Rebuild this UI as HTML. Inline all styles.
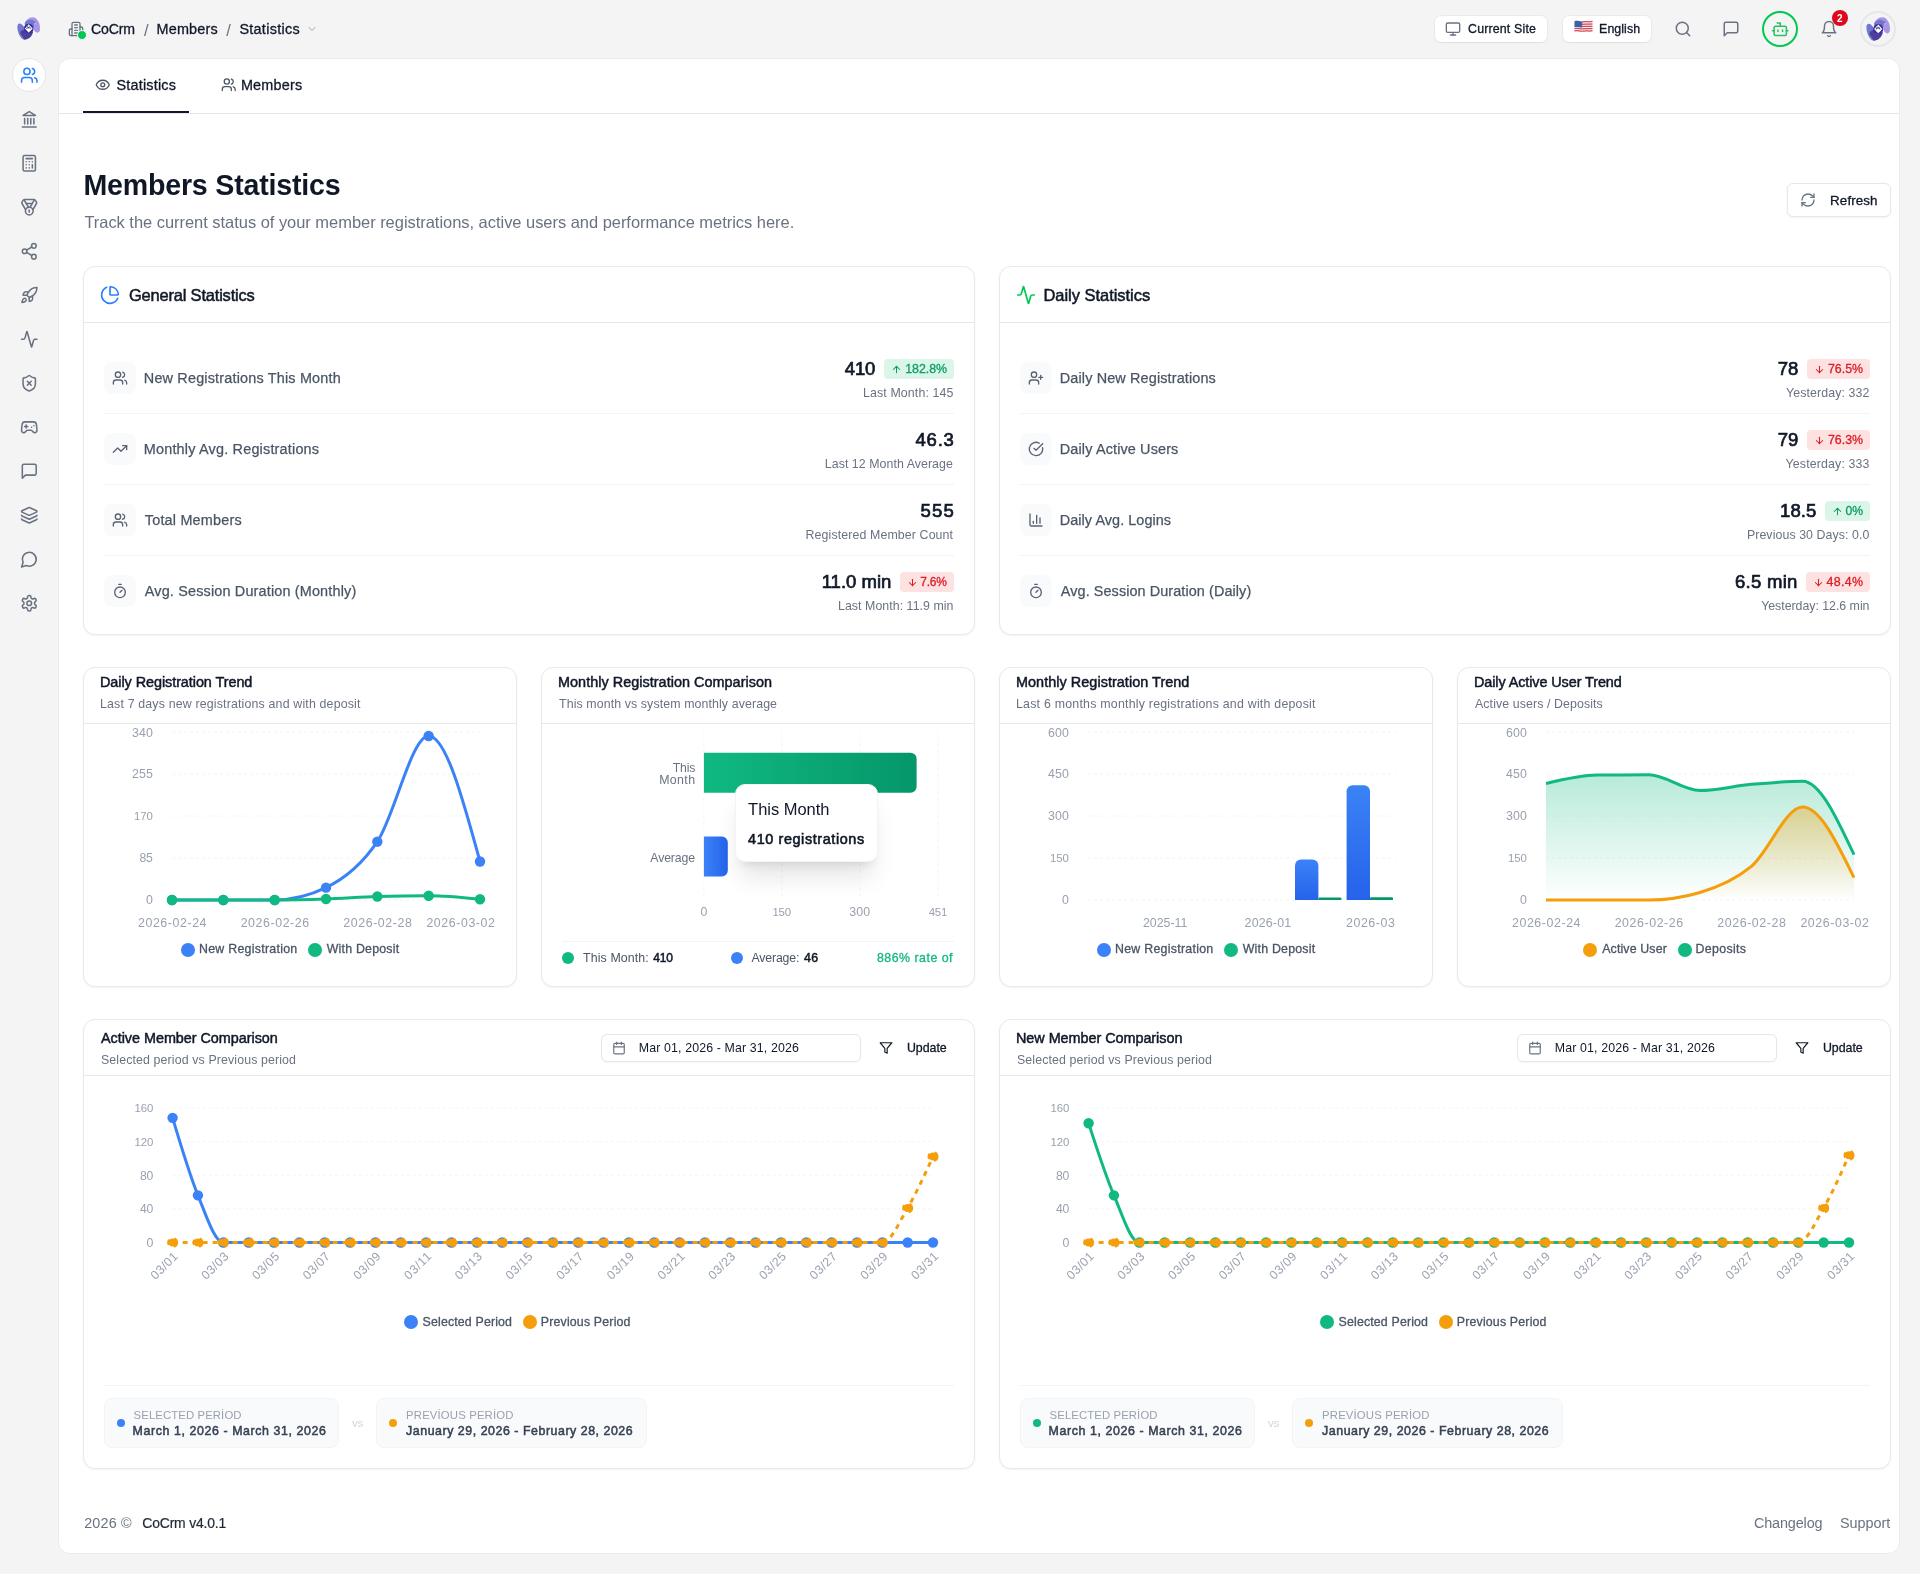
<!DOCTYPE html>
<html lang="en"><head><meta charset="utf-8"><title>Members Statistics</title>
<style>
html,body{margin:0;padding:0;background:#f4f4f5;}
#root{position:relative;width:1920px;height:1574px;overflow:hidden;font-family:"Liberation Sans", sans-serif;will-change:transform;}
#root div,#root svg,#root span.t{position:absolute;box-sizing:border-box;}
#root span.t{white-space:pre;line-height:1;}
.card{background:#fff;border:1px solid #e7e9ed;border-radius:12px;box-shadow:0 1px 2px rgba(0,0,0,0.05);}
</style></head><body><div id="root">
<svg style="left:17.10px;top:17.30px" width="23" height="23" viewBox="0 0 90 90">
<path d="M1.5 36 C2 30 5 26 9 25 C14 24.500 19 28 23 33 L30 42 L30 56 L40 70 L36 87.500 C32 88.500 29 88.500 26 88 C20 86 14 79 10 72 C5 63 1 50 1.500 36Z" fill="#7079cf"/>
<path d="M16 55 C20 52 25 50 29 49 L40 62 L63 56 C63 62 60 69 54 77 C48 83 42 86.500 37 87.500 C33 88.500 29 88.500 27 88 C26 82 22 76 17 70 C13 66 11 61 16 55Z" fill="#4b3f9b"/>
<path d="M31 22 C34 16 42 7 50 3 C56 0 66 0 71 3 C77 7 83 15 86 22 C89 30 90.500 42 89.500 51 C89 56 86 60 80 62 C76 62 70 57 67 52 C65 46 65.500 36 66 30 L77 21 L67 13 L45 11Z" fill="#a994e6"/>
<path d="M30 24 C33 18 40 12 45 11 C52 10 60 11 67 13 C71 15 75 18 77 21 C72 23 69 25 68 26 C66 30 66 34 66 38 L60 44 L32 40Z" fill="#7079cf"/>
<circle cx="46" cy="45" r="19" fill="#3a2a9c"/>
<path d="M46 27 Q52 39 62 45 Q52 51 46 61.500 Q40 51 30 45 Q40 39 46 28Z" fill="#fff"/>
<circle cx="46" cy="45" r="11" fill="#fff"/>
<path d="M38.500 47 q0.500 -9 3.500 -9 q2.500 0 3 6 q1 -6 3.500 -6 q3 0 4 9" fill="none" stroke="#2a2d4a" stroke-width="3.200"/>
</svg>
<svg style="left:67.80px;top:21.00px" width="16" height="16" viewBox="0 0 24 24" fill="none" stroke="#6a7282" stroke-width="2" stroke-linecap="round" stroke-linejoin="round" ><path d="M6 22V4a2 2 0 0 1 2-2h8a2 2 0 0 1 2 2v18Z"/><path d="M6 12H4a2 2 0 0 0-2 2v6a2 2 0 0 0 2 2h2"/><path d="M18 9h2a2 2 0 0 1 2 2v9a2 2 0 0 1-2 2h-2"/><path d="M10 6h4"/><path d="M10 10h4"/><path d="M10 14h4"/><path d="M10 18h4"/></svg>
<div style="left:76.7px;top:29.7px;width:10.6px;height:10.6px;border-radius:50%;background:#00c950;border:1.3px solid #f4f4f5"></div>
<span class="t" style="left:91.10px;top:22.44px;font-size:14.13px;color:#101828;letter-spacing:-0.173px;-webkit-text-stroke:0.3px #101828;">CoCrm</span>
<span class="t" style="left:144.00px;top:22.43px;font-size:16.5px;color:#6a7282;">/</span>
<span class="t" style="left:156.60px;top:22.19px;font-size:14.42px;color:#101828;letter-spacing:0.161px;-webkit-text-stroke:0.3px #101828;">Members</span>
<span class="t" style="left:226.20px;top:22.43px;font-size:16.5px;color:#6a7282;">/</span>
<span class="t" style="left:239.40px;top:22.19px;font-size:14.42px;color:#101828;letter-spacing:0.285px;-webkit-text-stroke:0.3px #101828;">Statistics</span>
<svg style="left:306.00px;top:23.00px" width="12" height="12" viewBox="0 0 24 24" fill="none" stroke="#99a1af" stroke-width="2" stroke-linecap="round" stroke-linejoin="round" ><path d="m6 9 6 6 6-6"/></svg>
<div style="left:1435px;top:15.5px;width:112px;height:26.5px;background:#fff;border-radius:6px;box-shadow:0 0 0 1px rgba(0,0,0,.035),0 1px 2px rgba(0,0,0,.06)"></div>
<svg style="left:1444.90px;top:21.00px" width="16" height="16" viewBox="0 0 24 24" fill="none" stroke="#6a7282" stroke-width="2" stroke-linecap="round" stroke-linejoin="round" ><rect width="20" height="14" x="2" y="3" rx="2"/><line x1="8" x2="16" y1="21" y2="21"/><line x1="12" x2="12" y1="17" y2="21"/></svg>
<span class="t" style="left:1468.10px;top:22.94px;font-size:12.36px;color:#101828;letter-spacing:0.166px;-webkit-text-stroke:0.3px #101828;">Current Site</span>
<div style="left:1563px;top:15.5px;width:88px;height:26.5px;background:#fff;border-radius:6px;box-shadow:0 0 0 1px rgba(0,0,0,.035),0 1px 2px rgba(0,0,0,.06)"></div>
<svg style="left:1573.5px;top:20px" width="19" height="13" viewBox="0 0 19 13">
<path d="M0.5 1.2 C4 0 6 2.2 9.5 1.4 C13 0.6 15 2 18.5 0.8 L18.5 11.2 C15 12.4 13 11 9.5 11.8 C6 12.6 4 10.4 0.5 11.6Z" fill="#f2f2f2"/>
<g stroke="#d84a5a" stroke-width="1.25" fill="none">
<path d="M8 1.9 C12 1.2 15 2.4 18.5 1.4"/><path d="M8 4.3 C12 3.6 15 4.8 18.5 3.8"/><path d="M8 6.6 C12 5.9 15 7.1 18.5 6.1"/>
<path d="M0.5 8.6 C4 7.4 6 9.6 9.5 8.8 C13 8 15 9.4 18.5 8.3"/><path d="M0.5 10.9 C4 9.7 6 11.9 9.5 11.1 C13 10.3 15 11.7 18.5 10.6"/></g>
<path d="M0.5 1.2 C3.5 0.2 5.5 1.8 8.2 1.5 L8.2 7.4 C5.5 7.8 3.5 6.3 0.5 7.3Z" fill="#3f5ea8"/>
</svg>
<span class="t" style="left:1599.10px;top:22.94px;font-size:12.36px;color:#101828;letter-spacing:0.073px;-webkit-text-stroke:0.3px #101828;">English</span>
<svg style="left:1674.30px;top:20.00px" width="18" height="18" viewBox="0 0 24 24" fill="none" stroke="#6a7282" stroke-width="2" stroke-linecap="round" stroke-linejoin="round" ><circle cx="11" cy="11" r="8"/><path d="m21 21-4.300-4.300"/></svg>
<svg style="left:1722.00px;top:20.30px" width="18" height="18" viewBox="0 0 24 24" fill="none" stroke="#6a7282" stroke-width="2" stroke-linecap="round" stroke-linejoin="round" ><path d="M21 15a2 2 0 0 1-2 2H7l-4 4V5a2 2 0 0 1 2-2h14a2 2 0 0 1 2 2z"/></svg>
<div style="left:1762px;top:11px;width:36px;height:36px;border-radius:50%;border:2px solid #00c950"></div>
<svg style="left:1770.75px;top:19.65px" width="18.5" height="18.5" viewBox="0 0 24 24" fill="none" stroke="#22c55e" stroke-width="2" stroke-linecap="round" stroke-linejoin="round" ><path d="M12 8V4H8"/><rect width="16" height="12" x="4" y="8" rx="2"/><path d="M2 14h2"/><path d="M20 14h2"/><path d="M15 13v2"/><path d="M9 13v2"/></svg>
<svg style="left:1820.00px;top:20.00px" width="18" height="18" viewBox="0 0 24 24" fill="none" stroke="#6a7282" stroke-width="2" stroke-linecap="round" stroke-linejoin="round" ><path d="M6 8a6 6 0 0 1 12 0c0 7 3 9 3 9H3s3-2 3-9"/><path d="M10.300 21a1.940 1.940 0 0 0 3.400 0"/></svg>
<div style="left:1832px;top:10px;width:16px;height:16px;border-radius:50%;background:#dc0a1f"></div>
<span class="t" style="left:1837.00px;top:13.93px;font-size:10px;color:#fff;font-weight:700;">2</span>
<div style="left:1860px;top:11px;width:36px;height:36px;border-radius:50%;border:2px solid #e5e7eb;background:#f4f4f5"></div>
<svg style="left:1866.00px;top:17.00px" width="24" height="24" viewBox="0 0 90 90">
<path d="M1.5 36 C2 30 5 26 9 25 C14 24.500 19 28 23 33 L30 42 L30 56 L40 70 L36 87.500 C32 88.500 29 88.500 26 88 C20 86 14 79 10 72 C5 63 1 50 1.500 36Z" fill="#7079cf"/>
<path d="M16 55 C20 52 25 50 29 49 L40 62 L63 56 C63 62 60 69 54 77 C48 83 42 86.500 37 87.500 C33 88.500 29 88.500 27 88 C26 82 22 76 17 70 C13 66 11 61 16 55Z" fill="#4b3f9b"/>
<path d="M31 22 C34 16 42 7 50 3 C56 0 66 0 71 3 C77 7 83 15 86 22 C89 30 90.500 42 89.500 51 C89 56 86 60 80 62 C76 62 70 57 67 52 C65 46 65.500 36 66 30 L77 21 L67 13 L45 11Z" fill="#a994e6"/>
<path d="M30 24 C33 18 40 12 45 11 C52 10 60 11 67 13 C71 15 75 18 77 21 C72 23 69 25 68 26 C66 30 66 34 66 38 L60 44 L32 40Z" fill="#7079cf"/>
<circle cx="46" cy="45" r="19" fill="#3a2a9c"/>
<path d="M46 27 Q52 39 62 45 Q52 51 46 61.500 Q40 51 30 45 Q40 39 46 28Z" fill="#fff"/>
<circle cx="46" cy="45" r="11" fill="#fff"/>
<path d="M38.500 47 q0.500 -9 3.500 -9 q2.500 0 3 6 q1 -6 3.500 -6 q3 0 4 9" fill="none" stroke="#2a2d4a" stroke-width="3.200"/>
</svg>
<div style="left:12px;top:58px;width:34px;height:34px;border-radius:50%;background:#fff;border:1px solid #e4e4e7"></div>
<svg style="left:19.75px;top:65.75px" width="18.5" height="18.5" viewBox="0 0 24 24" fill="none" stroke="#2b7fff" stroke-width="2" stroke-linecap="round" stroke-linejoin="round" ><path d="M16 21v-2a4 4 0 0 0-4-4H6a4 4 0 0 0-4 4v2"/><circle cx="9" cy="7" r="4"/><path d="M22 21v-2a4 4 0 0 0-3-3.87"/><path d="M16 3.13a4 4 0 0 1 0 7.75"/></svg>
<svg style="left:19.75px;top:109.75px" width="18.5" height="18.5" viewBox="0 0 24 24" fill="none" stroke="#6a7282" stroke-width="2" stroke-linecap="round" stroke-linejoin="round" ><line x1="3" x2="21" y1="22" y2="22"/><line x1="6" x2="6" y1="18" y2="11"/><line x1="10" x2="10" y1="18" y2="11"/><line x1="14" x2="14" y1="18" y2="11"/><line x1="18" x2="18" y1="18" y2="11"/><polygon points="12 2 20 7 4 7"/></svg>
<svg style="left:19.75px;top:153.75px" width="18.5" height="18.5" viewBox="0 0 24 24" fill="none" stroke="#6a7282" stroke-width="2" stroke-linecap="round" stroke-linejoin="round" ><rect width="16" height="20" x="4" y="2" rx="2"/><line x1="8" x2="16" y1="6" y2="6"/><line x1="16" x2="16" y1="14" y2="18"/><path d="M16 10h.01"/><path d="M12 10h.01"/><path d="M8 10h.01"/><path d="M12 14h.01"/><path d="M8 14h.01"/><path d="M12 18h.01"/><path d="M8 18h.01"/></svg>
<svg style="left:19.75px;top:197.75px" width="18.5" height="18.5" viewBox="0 0 24 24" fill="none" stroke="#6a7282" stroke-width="2" stroke-linecap="round" stroke-linejoin="round" ><path d="M7.21 15 2.66 7.14a2 2 0 0 1 .13-2.2L4.4 2.8A2 2 0 0 1 6 2h12a2 2 0 0 1 1.6.8l1.6 2.14a2 2 0 0 1 .14 2.2L16.79 15"/><path d="M11 12 5.12 2.2"/><path d="m13 12 5.88-9.8"/><path d="M8 7h8"/><circle cx="12" cy="17" r="5"/><path d="M12 18v-2h-.5"/></svg>
<svg style="left:19.75px;top:241.75px" width="18.5" height="18.5" viewBox="0 0 24 24" fill="none" stroke="#6a7282" stroke-width="2" stroke-linecap="round" stroke-linejoin="round" ><circle cx="18" cy="5" r="3"/><circle cx="6" cy="12" r="3"/><circle cx="18" cy="19" r="3"/><line x1="8.59" x2="15.42" y1="13.51" y2="17.49"/><line x1="15.41" x2="8.59" y1="6.51" y2="10.49"/></svg>
<svg style="left:19.75px;top:285.75px" width="18.5" height="18.5" viewBox="0 0 24 24" fill="none" stroke="#6a7282" stroke-width="2" stroke-linecap="round" stroke-linejoin="round" ><path d="M4.5 16.5c-1.5 1.26-2 5-2 5s3.74-.5 5-2c.71-.84.7-2.13-.09-2.91a2.18 2.18 0 0 0-2.91-.09z"/><path d="m12 15-3-3a22 22 0 0 1 2-3.95A12.88 12.88 0 0 1 22 2c0 2.72-.78 7.5-6 11a22.35 22.35 0 0 1-4 2z"/><path d="M9 12H4s.55-3.03 2-4c1.62-1.08 5 0 5 0"/><path d="M12 15v5s3.03-.55 4-2c1.08-1.62 0-5 0-5"/></svg>
<svg style="left:19.75px;top:329.75px" width="18.5" height="18.5" viewBox="0 0 24 24" fill="none" stroke="#6a7282" stroke-width="2" stroke-linecap="round" stroke-linejoin="round" ><path d="M22 12h-2.48a2 2 0 0 0-1.93 1.46l-2.35 8.36a.25.25 0 0 1-.48 0L9.24 2.18a.25.25 0 0 0-.48 0l-2.35 8.36A2 2 0 0 1 4.49 12H2"/></svg>
<svg style="left:19.75px;top:373.75px" width="18.5" height="18.5" viewBox="0 0 24 24" fill="none" stroke="#6a7282" stroke-width="2" stroke-linecap="round" stroke-linejoin="round" ><path d="M20 13c0 5-3.5 7.5-7.66 8.95a1 1 0 0 1-.67-.01C7.5 20.5 4 18 4 13V6a1 1 0 0 1 1-1c2 0 4.5-1.2 6.24-2.72a1.17 1.17 0 0 1 1.52 0C14.51 3.81 17 5 19 5a1 1 0 0 1 1 1z"/><path d="m14.500 9.500-5 5"/><path d="m9.500 9.500 5 5"/></svg>
<svg style="left:19.75px;top:417.75px" width="18.5" height="18.5" viewBox="0 0 24 24" fill="none" stroke="#6a7282" stroke-width="2" stroke-linecap="round" stroke-linejoin="round" ><line x1="6" x2="10" y1="11" y2="11"/><line x1="8" x2="8" y1="9" y2="13"/><line x1="15" x2="15.010" y1="12" y2="12"/><line x1="18" x2="18.010" y1="10" y2="10"/><path d="M17.320 5H6.680a4 4 0 0 0-3.978 3.590c-.006.052-.010.101-.017.152C2.604 9.416 2 14.456 2 16a3 3 0 0 0 3 3c1 0 1.500-.500 2-1l1.414-1.414A2 2 0 0 1 9.828 16h4.344a2 2 0 0 1 1.414.586L17 18c.500.500 1 1 2 1a3 3 0 0 0 3-3c0-1.545-.604-6.584-.685-7.258-.007-.050-.011-.100-.017-.151A4 4 0 0 0 17.320 5z"/></svg>
<svg style="left:19.75px;top:461.75px" width="18.5" height="18.5" viewBox="0 0 24 24" fill="none" stroke="#6a7282" stroke-width="2" stroke-linecap="round" stroke-linejoin="round" ><path d="M21 15a2 2 0 0 1-2 2H7l-4 4V5a2 2 0 0 1 2-2h14a2 2 0 0 1 2 2z"/></svg>
<svg style="left:19.75px;top:505.75px" width="18.5" height="18.5" viewBox="0 0 24 24" fill="none" stroke="#6a7282" stroke-width="2" stroke-linecap="round" stroke-linejoin="round" ><path d="M12.830 2.180a2 2 0 0 0-1.660 0L2.600 6.080a1 1 0 0 0 0 1.830l8.580 3.910a2 2 0 0 0 1.660 0l8.580-3.900a1 1 0 0 0 0-1.830z"/><path d="M2 12a1 1 0 0 0 .580.910l8.600 3.910a2 2 0 0 0 1.650 0l8.580-3.900A1 1 0 0 0 22 12"/><path d="M2 17a1 1 0 0 0 .580.910l8.600 3.910a2 2 0 0 0 1.650 0l8.580-3.900A1 1 0 0 0 22 17"/></svg>
<svg style="left:19.75px;top:549.75px" width="18.5" height="18.5" viewBox="0 0 24 24" fill="none" stroke="#6a7282" stroke-width="2" stroke-linecap="round" stroke-linejoin="round" ><path d="M7.900 20A9 9 0 1 0 4 16.100L2 22Z"/></svg>
<svg style="left:19.75px;top:593.75px" width="18.5" height="18.5" viewBox="0 0 24 24" fill="none" stroke="#6a7282" stroke-width="2" stroke-linecap="round" stroke-linejoin="round" ><path d="M12.220 2h-.440a2 2 0 0 0-2 2v.180a2 2 0 0 1-1 1.730l-.430.250a2 2 0 0 1-2 0l-.150-.080a2 2 0 0 0-2.730.730l-.220.380a2 2 0 0 0 .730 2.730l.150.100a2 2 0 0 1 1 1.720v.510a2 2 0 0 1-1 1.740l-.150.090a2 2 0 0 0-.730 2.730l.220.380a2 2 0 0 0 2.730.730l.150-.080a2 2 0 0 1 2 0l.430.250a2 2 0 0 1 1 1.730V20a2 2 0 0 0 2 2h.440a2 2 0 0 0 2-2v-.180a2 2 0 0 1 1-1.730l.430-.250a2 2 0 0 1 2 0l.150.080a2 2 0 0 0 2.730-.730l.220-.390a2 2 0 0 0-.730-2.730l-.150-.080a2 2 0 0 1-1-1.740v-.500a2 2 0 0 1 1-1.740l.150-.090a2 2 0 0 0 .730-2.730l-.220-.380a2 2 0 0 0-2.730-.730l-.150.080a2 2 0 0 1-2 0l-.430-.250a2 2 0 0 1-1-1.730V4a2 2 0 0 0-2-2z"/><circle cx="12" cy="12" r="3"/></svg>
<div style="left:58px;top:58px;width:1842px;height:1496px;background:#fff;border-radius:12px;border:1px solid #ebebee"></div>
<svg style="left:94.95px;top:77.25px" width="15.5" height="15.5" viewBox="0 0 24 24" fill="none" stroke="#4a5565" stroke-width="2" stroke-linecap="round" stroke-linejoin="round" ><path d="M2.062 12.348a1 1 0 0 1 0-.696 10.750 10.750 0 0 1 19.876 0 1 1 0 0 1 0 .696 10.750 10.750 0 0 1-19.876 0"/><circle cx="12" cy="12" r="3"/></svg>
<span class="t" style="left:116.40px;top:78.19px;font-size:14.42px;color:#101828;letter-spacing:0.218px;-webkit-text-stroke:0.3px #101828;">Statistics</span>
<svg style="left:220.95px;top:77.25px" width="15.5" height="15.5" viewBox="0 0 24 24" fill="none" stroke="#4a5565" stroke-width="2" stroke-linecap="round" stroke-linejoin="round" ><path d="M16 21v-2a4 4 0 0 0-4-4H6a4 4 0 0 0-4 4v2"/><circle cx="9" cy="7" r="4"/><path d="M22 21v-2a4 4 0 0 0-3-3.87"/><path d="M16 3.13a4 4 0 0 1 0 7.75"/></svg>
<span class="t" style="left:240.90px;top:78.19px;font-size:14.42px;color:#101828;letter-spacing:0.194px;-webkit-text-stroke:0.3px #101828;">Members</span>
<div style="left:59px;top:113px;width:1840px;height:1px;background:#e5e7eb"></div>
<div style="left:83px;top:111px;width:106px;height:2px;background:#101828"></div>
<span class="t" style="left:83.40px;top:171.19px;font-size:28.6px;color:#101828;font-weight:700;letter-spacing:-0.195px;">Members Statistics</span>
<span class="t" style="left:84.40px;top:214.45px;font-size:16.48px;color:#6a7282;letter-spacing:-0.027px;">Track the current status of your member registrations, active users and performance metrics here.</span>
<div style="left:1787px;top:183px;width:104px;height:34px;background:#fff;border:1px solid #e5e7eb;border-radius:6px;box-shadow:0 1px 2px rgba(0,0,0,.05)"></div>
<svg style="left:1800.00px;top:192.00px" width="16" height="16" viewBox="0 0 24 24" fill="none" stroke="#6a7282" stroke-width="2" stroke-linecap="round" stroke-linejoin="round" ><path d="M3 12a9 9 0 0 1 9-9 9.750 9.750 0 0 1 6.740 2.740L21 8"/><path d="M21 3v5h-5"/><path d="M21 12a9 9 0 0 1-9 9 9.750 9.750 0 0 1-6.740-2.740L3 16"/><path d="M8 16H3v5"/></svg>
<span class="t" style="left:1830.10px;top:194.07px;font-size:13.39px;color:#101828;letter-spacing:0.101px;-webkit-text-stroke:0.3px #101828;">Refresh</span>
<span class="t" style="left:84.15px;top:1516.19px;font-size:14.42px;color:#6a7282;letter-spacing:0.180px;">2026 ©</span>
<span class="t" style="left:142.30px;top:1516.61px;font-size:13.93px;color:#1e2939;letter-spacing:-0.173px;-webkit-text-stroke:0.2px #1e2939;">CoCrm v4.0.1</span>
<span class="t" style="left:1753.90px;top:1516.19px;font-size:14.42px;color:#6a7282;letter-spacing:-0.122px;">Changelog</span>
<span class="t" style="left:1839.90px;top:1516.19px;font-size:14.42px;color:#6a7282;letter-spacing:-0.026px;">Support</span>
<div class="card" style="left:83px;top:266px;width:892px;height:369px"></div>
<div style="left:84px;top:322px;width:890px;height:1px;background:#e5e7eb"></div>
<svg style="left:100.00px;top:285.00px" width="20" height="20" viewBox="0 0 24 24" fill="none" stroke="#2b7fff" stroke-width="2" stroke-linecap="round" stroke-linejoin="round" ><path d="M21 12c.552 0 1.005-.449.950-.998a10 10 0 0 0-8.953-8.951c-.550-.055-.998.398-.998.950v8a1 1 0 0 0 1 1z"/><path d="M21.210 15.890A10 10 0 1 1 8 2.830"/></svg>
<span class="t" style="left:128.90px;top:287.45px;font-size:16.48px;color:#101828;letter-spacing:-0.184px;-webkit-text-stroke:0.52px #101828;">General Statistics</span>
<div style="left:104px;top:362px;width:32px;height:32px;border-radius:8px;background:#f9fafb"></div>
<svg style="left:112.00px;top:370.00px" width="16" height="16" viewBox="0 0 24 24" fill="none" stroke="#5b6373" stroke-width="2" stroke-linecap="round" stroke-linejoin="round" ><path d="M16 21v-2a4 4 0 0 0-4-4H6a4 4 0 0 0-4 4v2"/><circle cx="9" cy="7" r="4"/><path d="M22 21v-2a4 4 0 0 0-3-3.87"/><path d="M16 3.13a4 4 0 0 1 0 7.75"/></svg>
<span class="t" style="left:143.80px;top:371.19px;font-size:14.42px;color:#4a5565;letter-spacing:0.184px;-webkit-text-stroke:0.25px #4a5565;">New Registrations This Month</span>
<div style="left:104px;top:413px;width:850px;height:1px;background:#f3f4f6"></div>
<div style="left:884.0px;top:359.0px;width:70px;height:20px;border-radius:4px;background:#dcf5e9"></div>
<svg style="left:890.50px;top:363.50px" width="11" height="11" viewBox="0 0 24 24" fill="none" stroke="#0a9d68" stroke-width="2.2" stroke-linecap="round" stroke-linejoin="round" ><path d="m5 12 7-7 7 7"/><path d="M12 19V5"/></svg>
<span class="t" style="left:905.30px;top:362.94px;font-size:12.36px;color:#0a9d68;letter-spacing:-0.046px;-webkit-text-stroke:0.3px #0a9d68;">182.8%</span>
<span class="t" style="left:844.80px;top:359.71px;font-size:18.54px;color:#101828;letter-spacing:-0.156px;-webkit-text-stroke:0.7px #101828;">410</span>
<span class="t" style="left:862.90px;top:386.94px;font-size:12.36px;color:#6a7282;letter-spacing:0.139px;">Last Month: 145</span>
<div style="left:104px;top:433px;width:32px;height:32px;border-radius:8px;background:#f9fafb"></div>
<svg style="left:112.00px;top:441.00px" width="16" height="16" viewBox="0 0 24 24" fill="none" stroke="#5b6373" stroke-width="2" stroke-linecap="round" stroke-linejoin="round" ><polyline points="22 7 13.500 15.500 8.500 10.500 2 17"/><polyline points="16 7 22 7 22 13"/></svg>
<span class="t" style="left:143.80px;top:442.19px;font-size:14.42px;color:#4a5565;letter-spacing:0.197px;-webkit-text-stroke:0.25px #4a5565;">Monthly Avg. Registrations</span>
<div style="left:104px;top:484px;width:850px;height:1px;background:#f3f4f6"></div>
<span class="t" style="left:915.40px;top:430.71px;font-size:18.54px;color:#101828;letter-spacing:0.813px;-webkit-text-stroke:0.7px #101828;">46.3</span>
<span class="t" style="left:824.80px;top:457.94px;font-size:12.36px;color:#6a7282;letter-spacing:0.055px;">Last 12 Month Average</span>
<div style="left:104px;top:504px;width:32px;height:32px;border-radius:8px;background:#f9fafb"></div>
<svg style="left:112.00px;top:512.00px" width="16" height="16" viewBox="0 0 24 24" fill="none" stroke="#5b6373" stroke-width="2" stroke-linecap="round" stroke-linejoin="round" ><path d="M16 21v-2a4 4 0 0 0-4-4H6a4 4 0 0 0-4 4v2"/><circle cx="9" cy="7" r="4"/><path d="M22 21v-2a4 4 0 0 0-3-3.87"/><path d="M16 3.13a4 4 0 0 1 0 7.75"/></svg>
<span class="t" style="left:144.80px;top:513.19px;font-size:14.42px;color:#4a5565;letter-spacing:0.194px;-webkit-text-stroke:0.25px #4a5565;">Total Members</span>
<div style="left:104px;top:555px;width:850px;height:1px;background:#f3f4f6"></div>
<span class="t" style="left:920.50px;top:501.71px;font-size:18.54px;color:#101828;letter-spacing:1.244px;-webkit-text-stroke:0.7px #101828;">555</span>
<span class="t" style="left:805.50px;top:528.94px;font-size:12.36px;color:#6a7282;letter-spacing:0.118px;">Registered Member Count</span>
<div style="left:104px;top:575px;width:32px;height:32px;border-radius:8px;background:#f9fafb"></div>
<svg style="left:112.00px;top:583.00px" width="16" height="16" viewBox="0 0 24 24" fill="none" stroke="#5b6373" stroke-width="2" stroke-linecap="round" stroke-linejoin="round" ><line x1="10" x2="14" y1="2" y2="2"/><line x1="12" x2="15" y1="14" y2="11"/><circle cx="12" cy="14" r="8"/></svg>
<span class="t" style="left:144.80px;top:584.19px;font-size:14.42px;color:#4a5565;letter-spacing:0.169px;-webkit-text-stroke:0.25px #4a5565;">Avg. Session Duration (Monthly)</span>
<div style="left:900.0px;top:572.0px;width:54px;height:20px;border-radius:4px;background:#fee2e2"></div>
<svg style="left:906.50px;top:576.50px" width="11" height="11" viewBox="0 0 24 24" fill="none" stroke="#dc1c24" stroke-width="2.2" stroke-linecap="round" stroke-linejoin="round" ><path d="M12 5v14"/><path d="m19 12-7 7-7-7"/></svg>
<span class="t" style="left:920.20px;top:577.28px;font-size:11.95px;color:#dc1c24;letter-spacing:-0.148px;-webkit-text-stroke:0.3px #dc1c24;">7.6%</span>
<span class="t" style="left:821.70px;top:572.71px;font-size:18.54px;color:#101828;-webkit-text-stroke:0.7px #101828;">11.0 min</span>
<span class="t" style="left:838.00px;top:599.94px;font-size:12.36px;color:#6a7282;letter-spacing:0.051px;">Last Month: 11.9 min</span>
<div class="card" style="left:999px;top:266px;width:892px;height:369px"></div>
<div style="left:1000px;top:322px;width:890px;height:1px;background:#e5e7eb"></div>
<svg style="left:1016.00px;top:285.00px" width="20" height="20" viewBox="0 0 24 24" fill="none" stroke="#00c950" stroke-width="2" stroke-linecap="round" stroke-linejoin="round" ><path d="M22 12h-2.48a2 2 0 0 0-1.93 1.46l-2.35 8.36a.25.25 0 0 1-.48 0L9.24 2.18a.25.25 0 0 0-.48 0l-2.35 8.36A2 2 0 0 1 4.49 12H2"/></svg>
<span class="t" style="left:1043.50px;top:287.45px;font-size:16.48px;color:#101828;letter-spacing:-0.029px;-webkit-text-stroke:0.52px #101828;">Daily Statistics</span>
<div style="left:1020px;top:362px;width:32px;height:32px;border-radius:8px;background:#f9fafb"></div>
<svg style="left:1028.00px;top:370.00px" width="16" height="16" viewBox="0 0 24 24" fill="none" stroke="#5b6373" stroke-width="2" stroke-linecap="round" stroke-linejoin="round" ><path d="M16 21v-2a4 4 0 0 0-4-4H6a4 4 0 0 0-4 4v2"/><circle cx="9" cy="7" r="4"/><line x1="19" x2="19" y1="8" y2="14"/><line x1="22" x2="16" y1="11" y2="11"/></svg>
<span class="t" style="left:1059.80px;top:371.19px;font-size:14.42px;color:#4a5565;letter-spacing:0.140px;-webkit-text-stroke:0.25px #4a5565;">Daily New Registrations</span>
<div style="left:1020px;top:413px;width:850px;height:1px;background:#f3f4f6"></div>
<div style="left:1807.0px;top:359.0px;width:63px;height:20px;border-radius:4px;background:#fee2e2"></div>
<svg style="left:1813.50px;top:363.50px" width="11" height="11" viewBox="0 0 24 24" fill="none" stroke="#dc1c24" stroke-width="2.2" stroke-linecap="round" stroke-linejoin="round" ><path d="M12 5v14"/><path d="m19 12-7 7-7-7"/></svg>
<span class="t" style="left:1828.00px;top:362.94px;font-size:12.36px;color:#dc1c24;letter-spacing:-0.014px;-webkit-text-stroke:0.3px #dc1c24;">76.5%</span>
<span class="t" style="left:1777.70px;top:359.71px;font-size:18.54px;color:#101828;letter-spacing:0.094px;-webkit-text-stroke:0.7px #101828;">78</span>
<span class="t" style="left:1786.00px;top:386.94px;font-size:12.36px;color:#6a7282;letter-spacing:0.113px;">Yesterday: 332</span>
<div style="left:1020px;top:433px;width:32px;height:32px;border-radius:8px;background:#f9fafb"></div>
<svg style="left:1028.00px;top:441.00px" width="16" height="16" viewBox="0 0 24 24" fill="none" stroke="#5b6373" stroke-width="2" stroke-linecap="round" stroke-linejoin="round" ><path d="M21.801 10A10 10 0 1 1 17 3.335"/><path d="m9 11 3 3L22 4"/></svg>
<span class="t" style="left:1059.80px;top:442.19px;font-size:14.42px;color:#4a5565;letter-spacing:0.143px;-webkit-text-stroke:0.25px #4a5565;">Daily Active Users</span>
<div style="left:1020px;top:484px;width:850px;height:1px;background:#f3f4f6"></div>
<div style="left:1807.0px;top:430.0px;width:63px;height:20px;border-radius:4px;background:#fee2e2"></div>
<svg style="left:1813.50px;top:434.50px" width="11" height="11" viewBox="0 0 24 24" fill="none" stroke="#dc1c24" stroke-width="2.2" stroke-linecap="round" stroke-linejoin="round" ><path d="M12 5v14"/><path d="m19 12-7 7-7-7"/></svg>
<span class="t" style="left:1828.00px;top:433.94px;font-size:12.36px;color:#dc1c24;letter-spacing:-0.014px;-webkit-text-stroke:0.3px #dc1c24;">76.3%</span>
<span class="t" style="left:1777.70px;top:430.71px;font-size:18.54px;color:#101828;letter-spacing:0.094px;-webkit-text-stroke:0.7px #101828;">79</span>
<span class="t" style="left:1785.60px;top:457.94px;font-size:12.36px;color:#6a7282;letter-spacing:0.144px;">Yesterday: 333</span>
<div style="left:1020px;top:504px;width:32px;height:32px;border-radius:8px;background:#f9fafb"></div>
<svg style="left:1028.00px;top:512.00px" width="16" height="16" viewBox="0 0 24 24" fill="none" stroke="#5b6373" stroke-width="2" stroke-linecap="round" stroke-linejoin="round" ><path d="M3 3v16a2 2 0 0 0 2 2h16"/><path d="M18 17V9"/><path d="M13 17V5"/><path d="M8 17v-3"/></svg>
<span class="t" style="left:1059.80px;top:513.19px;font-size:14.42px;color:#4a5565;letter-spacing:0.060px;-webkit-text-stroke:0.25px #4a5565;">Daily Avg. Logins</span>
<div style="left:1020px;top:555px;width:850px;height:1px;background:#f3f4f6"></div>
<div style="left:1825.0px;top:501.0px;width:45px;height:20px;border-radius:4px;background:#dcf5e9"></div>
<svg style="left:1831.50px;top:505.50px" width="11" height="11" viewBox="0 0 24 24" fill="none" stroke="#0a9d68" stroke-width="2.2" stroke-linecap="round" stroke-linejoin="round" ><path d="m5 12 7-7 7 7"/><path d="M12 19V5"/></svg>
<span class="t" style="left:1845.50px;top:505.07px;font-size:12.2px;color:#0a9d68;letter-spacing:-0.148px;-webkit-text-stroke:0.3px #0a9d68;">0%</span>
<span class="t" style="left:1780.10px;top:501.71px;font-size:18.54px;color:#101828;letter-spacing:0.080px;-webkit-text-stroke:0.7px #101828;">18.5</span>
<span class="t" style="left:1746.90px;top:528.94px;font-size:12.36px;color:#6a7282;letter-spacing:0.083px;">Previous 30 Days: 0.0</span>
<div style="left:1020px;top:575px;width:32px;height:32px;border-radius:8px;background:#f9fafb"></div>
<svg style="left:1028.00px;top:583.00px" width="16" height="16" viewBox="0 0 24 24" fill="none" stroke="#5b6373" stroke-width="2" stroke-linecap="round" stroke-linejoin="round" ><line x1="10" x2="14" y1="2" y2="2"/><line x1="12" x2="15" y1="14" y2="11"/><circle cx="12" cy="14" r="8"/></svg>
<span class="t" style="left:1060.80px;top:584.19px;font-size:14.42px;color:#4a5565;letter-spacing:0.089px;-webkit-text-stroke:0.25px #4a5565;">Avg. Session Duration (Daily)</span>
<div style="left:1806.0px;top:572.0px;width:64px;height:20px;border-radius:4px;background:#fee2e2"></div>
<svg style="left:1812.50px;top:576.50px" width="11" height="11" viewBox="0 0 24 24" fill="none" stroke="#dc1c24" stroke-width="2.2" stroke-linecap="round" stroke-linejoin="round" ><path d="M12 5v14"/><path d="m19 12-7 7-7-7"/></svg>
<span class="t" style="left:1826.60px;top:575.94px;font-size:12.36px;color:#dc1c24;letter-spacing:0.336px;-webkit-text-stroke:0.3px #dc1c24;">48.4%</span>
<span class="t" style="left:1735.00px;top:572.71px;font-size:18.54px;color:#101828;letter-spacing:0.273px;-webkit-text-stroke:0.7px #101828;">6.5 min</span>
<span class="t" style="left:1761.20px;top:599.94px;font-size:12.36px;color:#6a7282;letter-spacing:-0.028px;">Yesterday: 12.6 min</span>
<div class="card" style="left:83px;top:667px;width:434px;height:320px"></div>
<div style="left:84px;top:723px;width:432px;height:1px;background:#e5e7eb"></div>
<span class="t" style="left:100.00px;top:675.19px;font-size:14.42px;color:#101828;letter-spacing:-0.060px;-webkit-text-stroke:0.48px #101828;">Daily Registration Trend</span>
<span class="t" style="left:100.00px;top:697.94px;font-size:12.36px;color:#6a7282;letter-spacing:0.169px;">Last 7 days new registrations and with deposit</span>
<svg style="left:0;top:0" width="1920" height="1574" viewBox="0 0 1920 1574"><g stroke="#f3f4f6" stroke-width="1" stroke-dasharray="3 3"><line x1="172" x2="480" y1="732" y2="732"/><line x1="172" x2="480" y1="774" y2="774"/><line x1="172" x2="480" y1="816" y2="816"/><line x1="172" x2="480" y1="858" y2="858"/><line x1="172" x2="480" y1="900" y2="900"/></g><path d="M172.00,900.00C189.11,900.00,206.22,900.00,223.33,900.00C240.44,900.00,257.56,900.00,274.67,900.00C291.78,900.00,308.89,895.88,326.00,887.65C343.11,879.41,360.22,866.98,377.33,841.69C394.44,816.41,411.56,735.95,428.67,735.95C445.78,735.95,462.89,798.71,480.00,861.46" fill="none" stroke="#3b82f6" stroke-width="3" stroke-linecap="round"/><circle cx="172.00" cy="900.00" r="5.2" fill="#3b82f6"/><circle cx="223.33" cy="900.00" r="5.2" fill="#3b82f6"/><circle cx="274.67" cy="900.00" r="5.2" fill="#3b82f6"/><circle cx="326.00" cy="887.65" r="5.2" fill="#3b82f6"/><circle cx="377.33" cy="841.69" r="5.2" fill="#3b82f6"/><circle cx="428.67" cy="735.95" r="5.2" fill="#3b82f6"/><circle cx="480.00" cy="861.46" r="5.2" fill="#3b82f6"/><path d="M172.00,900.00C189.11,900.00,206.22,900.00,223.33,900.00C240.44,900.00,257.56,900.00,274.67,900.00C291.78,900.00,308.89,899.59,326.00,899.01C343.11,898.44,360.22,897.04,377.33,896.54C394.44,896.05,411.56,895.80,428.67,895.80C445.78,895.80,462.89,897.53,480.00,899.26" fill="none" stroke="#10b981" stroke-width="3" stroke-linecap="round"/><circle cx="172.00" cy="900.00" r="5.2" fill="#10b981"/><circle cx="223.33" cy="900.00" r="5.2" fill="#10b981"/><circle cx="274.67" cy="900.00" r="5.2" fill="#10b981"/><circle cx="326.00" cy="899.01" r="5.2" fill="#10b981"/><circle cx="377.33" cy="896.54" r="5.2" fill="#10b981"/><circle cx="428.67" cy="895.80" r="5.2" fill="#10b981"/><circle cx="480.00" cy="899.26" r="5.2" fill="#10b981"/></svg>
<span class="t" style="left:131.95px;top:726.94px;font-size:12.36px;color:#99a1af;letter-spacing:0.101px;">340</span>
<span class="t" style="left:131.95px;top:767.94px;font-size:12.36px;color:#99a1af;letter-spacing:0.101px;">255</span>
<span class="t" style="left:134.10px;top:810.77px;font-size:11.38px;color:#99a1af;letter-spacing:-0.148px;">170</span>
<span class="t" style="left:139.40px;top:852.11px;font-size:12.16px;color:#99a1af;letter-spacing:-0.148px;">85</span>
<span class="t" style="left:145.90px;top:893.94px;font-size:12.36px;color:#99a1af;">0</span>
<span class="t" style="left:138.00px;top:916.94px;font-size:12.36px;color:#99a1af;letter-spacing:0.584px;">2026-02-24</span>
<span class="t" style="left:240.67px;top:916.94px;font-size:12.36px;color:#99a1af;letter-spacing:0.584px;">2026-02-26</span>
<span class="t" style="left:343.33px;top:916.94px;font-size:12.36px;color:#99a1af;letter-spacing:0.584px;">2026-02-28</span>
<span class="t" style="left:426.40px;top:916.94px;font-size:12.36px;color:#99a1af;letter-spacing:0.584px;">2026-03-02</span>
<div style="left:180.9px;top:943.0px;width:14px;height:14px;border-radius:50%;background:#3b82f6"></div>
<span class="t" style="left:199.00px;top:942.94px;font-size:12.36px;color:#4a5565;letter-spacing:0.271px;-webkit-text-stroke:0.3px #4a5565;">New Registration</span>
<div style="left:307.9px;top:943.0px;width:14px;height:14px;border-radius:50%;background:#10b981"></div>
<span class="t" style="left:326.70px;top:942.94px;font-size:12.36px;color:#4a5565;letter-spacing:0.216px;-webkit-text-stroke:0.3px #4a5565;">With Deposit</span>
<div class="card" style="left:999px;top:667px;width:434px;height:320px"></div>
<div style="left:1000px;top:723px;width:432px;height:1px;background:#e5e7eb"></div>
<span class="t" style="left:1016.00px;top:675.19px;font-size:14.42px;color:#101828;letter-spacing:0.048px;-webkit-text-stroke:0.48px #101828;">Monthly Registration Trend</span>
<span class="t" style="left:1016.00px;top:697.94px;font-size:12.36px;color:#6a7282;letter-spacing:0.229px;">Last 6 months monthly registrations and with deposit</span>
<svg style="left:0;top:0" width="1920" height="1574" viewBox="0 0 1920 1574"><defs><linearGradient id="vb" x1="0" x2="0" y1="0" y2="1"><stop offset="0" stop-color="#3b82f6"/><stop offset="1" stop-color="#2563eb"/></linearGradient></defs><g stroke="#f3f4f6" stroke-width="1" stroke-dasharray="3 3"><line x1="1088" x2="1396" y1="732" y2="732"/><line x1="1088" x2="1396" y1="774" y2="774"/><line x1="1088" x2="1396" y1="816" y2="816"/><line x1="1088" x2="1396" y1="858" y2="858"/><line x1="1088" x2="1396" y1="900" y2="900"/></g><path d="M1295,900V865.40a6,6 0 0 1 6,-6H1312.40a6,6 0 0 1 6,6V900Z" fill="url(#vb)"/><path d="M1318.4,900V898.60a1.2,1.2 0 0 1 1.2,-1.2H1340.20a1.2,1.2 0 0 1 1.2,1.2V900Z" fill="#059669"/><path d="M1346.6,900V791.20a6,6 0 0 1 6,-6H1364.00a6,6 0 0 1 6,6V900Z" fill="url(#vb)"/><path d="M1370,900V898.40a1.2,1.2 0 0 1 1.2,-1.2H1391.80a1.2,1.2 0 0 1 1.2,1.2V900Z" fill="#059669"/></svg>
<span class="t" style="left:1047.95px;top:726.94px;font-size:12.36px;color:#99a1af;letter-spacing:0.101px;">600</span>
<span class="t" style="left:1047.95px;top:767.94px;font-size:12.36px;color:#99a1af;letter-spacing:0.101px;">450</span>
<span class="t" style="left:1047.95px;top:809.94px;font-size:12.36px;color:#99a1af;letter-spacing:0.101px;">300</span>
<span class="t" style="left:1050.10px;top:852.77px;font-size:11.38px;color:#99a1af;letter-spacing:-0.148px;">150</span>
<span class="t" style="left:1061.90px;top:893.94px;font-size:12.36px;color:#99a1af;">0</span>
<span class="t" style="left:1142.90px;top:916.94px;font-size:12.36px;color:#99a1af;letter-spacing:0.006px;">2025-11</span>
<span class="t" style="left:1244.60px;top:916.94px;font-size:12.36px;color:#99a1af;letter-spacing:0.186px;">2026-01</span>
<span class="t" style="left:1346.10px;top:916.94px;font-size:12.36px;color:#99a1af;letter-spacing:0.553px;">2026-03</span>
<div style="left:1096.9px;top:943.0px;width:14px;height:14px;border-radius:50%;background:#3b82f6"></div>
<span class="t" style="left:1115.00px;top:942.94px;font-size:12.36px;color:#4a5565;letter-spacing:0.271px;-webkit-text-stroke:0.3px #4a5565;">New Registration</span>
<div style="left:1223.9px;top:943.0px;width:14px;height:14px;border-radius:50%;background:#10b981"></div>
<span class="t" style="left:1242.70px;top:942.94px;font-size:12.36px;color:#4a5565;letter-spacing:0.216px;-webkit-text-stroke:0.3px #4a5565;">With Deposit</span>
<div class="card" style="left:1457px;top:667px;width:434px;height:320px"></div>
<div style="left:1458px;top:723px;width:432px;height:1px;background:#e5e7eb"></div>
<span class="t" style="left:1474.00px;top:675.19px;font-size:14.42px;color:#101828;letter-spacing:-0.089px;-webkit-text-stroke:0.48px #101828;">Daily Active User Trend</span>
<span class="t" style="left:1475.00px;top:697.94px;font-size:12.36px;color:#6a7282;letter-spacing:0.095px;">Active users / Deposits</span>
<svg style="left:0;top:0" width="1920" height="1574" viewBox="0 0 1920 1574"><defs><linearGradient id="ag" x1="0" x2="0" y1="0" y2="1"><stop offset="0" stop-color="#10b981" stop-opacity=".3"/><stop offset="1" stop-color="#10b981" stop-opacity="0"/></linearGradient><linearGradient id="ao" x1="0" x2="0" y1="0" y2="1"><stop offset="0" stop-color="#f59e0b" stop-opacity=".38"/><stop offset="1" stop-color="#f59e0b" stop-opacity="0"/></linearGradient></defs><g stroke="#f3f4f6" stroke-width="1" stroke-dasharray="3 3"><line x1="1546" x2="1854" y1="732" y2="732"/><line x1="1546" x2="1854" y1="774" y2="774"/><line x1="1546" x2="1854" y1="816" y2="816"/><line x1="1546" x2="1854" y1="858" y2="858"/><line x1="1546" x2="1854" y1="900" y2="900"/></g><path d="M1546.00,783.52C1563.11,779.41,1580.22,775.31,1597.33,775.12C1614.44,774.93,1631.56,774.84,1648.67,774.84C1665.78,774.84,1682.89,790.52,1700.00,790.52C1717.11,790.52,1734.22,785.90,1751.33,784.36C1768.44,782.82,1785.56,781.28,1802.67,781.28C1819.78,781.28,1836.89,817.96,1854.00,854.64L1854.00,900L1546.00,900Z" fill="url(#ag)"/><path d="M1546.00,900.00C1563.11,900.00,1580.22,900.00,1597.33,900.00C1614.44,900.00,1631.56,900.00,1648.67,900.00C1665.78,900.00,1682.89,897.48,1700.00,892.44C1717.11,887.40,1734.22,880.63,1751.33,866.40C1768.44,852.17,1785.56,807.04,1802.67,807.04C1819.78,807.04,1836.89,842.32,1854.00,877.60L1854.00,900L1546.00,900Z" fill="url(#ao)"/><path d="M1546.00,783.52C1563.11,779.41,1580.22,775.31,1597.33,775.12C1614.44,774.93,1631.56,774.84,1648.67,774.84C1665.78,774.84,1682.89,790.52,1700.00,790.52C1717.11,790.52,1734.22,785.90,1751.33,784.36C1768.44,782.82,1785.56,781.28,1802.67,781.28C1819.78,781.28,1836.89,817.96,1854.00,854.64" fill="none" stroke="#10b981" stroke-width="3"/><path d="M1546.00,900.00C1563.11,900.00,1580.22,900.00,1597.33,900.00C1614.44,900.00,1631.56,900.00,1648.67,900.00C1665.78,900.00,1682.89,897.48,1700.00,892.44C1717.11,887.40,1734.22,880.63,1751.33,866.40C1768.44,852.17,1785.56,807.04,1802.67,807.04C1819.78,807.04,1836.89,842.32,1854.00,877.60" fill="none" stroke="#f59e0b" stroke-width="3"/></svg>
<span class="t" style="left:1505.95px;top:726.94px;font-size:12.36px;color:#99a1af;letter-spacing:0.101px;">600</span>
<span class="t" style="left:1505.95px;top:767.94px;font-size:12.36px;color:#99a1af;letter-spacing:0.101px;">450</span>
<span class="t" style="left:1505.95px;top:809.94px;font-size:12.36px;color:#99a1af;letter-spacing:0.101px;">300</span>
<span class="t" style="left:1508.10px;top:852.77px;font-size:11.38px;color:#99a1af;letter-spacing:-0.148px;">150</span>
<span class="t" style="left:1519.90px;top:893.94px;font-size:12.36px;color:#99a1af;">0</span>
<span class="t" style="left:1512.00px;top:916.94px;font-size:12.36px;color:#99a1af;letter-spacing:0.584px;">2026-02-24</span>
<span class="t" style="left:1614.67px;top:916.94px;font-size:12.36px;color:#99a1af;letter-spacing:0.584px;">2026-02-26</span>
<span class="t" style="left:1717.33px;top:916.94px;font-size:12.36px;color:#99a1af;letter-spacing:0.584px;">2026-02-28</span>
<span class="t" style="left:1800.40px;top:916.94px;font-size:12.36px;color:#99a1af;letter-spacing:0.584px;">2026-03-02</span>
<div style="left:1582.9px;top:943.0px;width:14px;height:14px;border-radius:50%;background:#f59e0b"></div>
<span class="t" style="left:1602.20px;top:942.94px;font-size:12.36px;color:#4a5565;letter-spacing:0.143px;-webkit-text-stroke:0.3px #4a5565;">Active User</span>
<div style="left:1677.8px;top:943.0px;width:14px;height:14px;border-radius:50%;background:#10b981"></div>
<span class="t" style="left:1695.60px;top:942.94px;font-size:12.36px;color:#4a5565;letter-spacing:0.328px;-webkit-text-stroke:0.3px #4a5565;">Deposits</span>
<div class="card" style="left:541px;top:667px;width:434px;height:320px"></div>
<div style="left:542px;top:723px;width:432px;height:1px;background:#e5e7eb"></div>
<span class="t" style="left:558.00px;top:675.19px;font-size:14.42px;color:#101828;letter-spacing:0.034px;-webkit-text-stroke:0.48px #101828;">Monthly Registration Comparison</span>
<span class="t" style="left:559.00px;top:697.94px;font-size:12.36px;color:#6a7282;letter-spacing:0.105px;">This month vs system monthly average</span>
<svg style="left:0;top:0" width="1920" height="1574" viewBox="0 0 1920 1574"><defs><linearGradient id="gg" x1="0" x2="1" y1="0" y2="0"><stop offset="0" stop-color="#10b981"/><stop offset="1" stop-color="#059669"/></linearGradient><linearGradient id="gb" x1="0" x2="1" y1="0" y2="0"><stop offset="0" stop-color="#3b82f6"/><stop offset="1" stop-color="#2563eb"/></linearGradient></defs><g stroke="#f3f4f6" stroke-width="1" stroke-dasharray="3 3"><line x1="703.9" x2="703.9" y1="731.5" y2="896"/><line x1="781.8" x2="781.8" y1="731.5" y2="896"/><line x1="859.7" x2="859.7" y1="731.5" y2="896"/><line x1="938.1" x2="938.1" y1="731.5" y2="896"/></g><path d="M703.9,752.8H910.6a6,6 0 0 1 6,6V786.8a6,6 0 0 1 -6,6H703.9Z" fill="url(#gg)"/><path d="M703.9,836.5H721.8a6,6 0 0 1 6,6V870.5a6,6 0 0 1 -6,6H703.9Z" fill="url(#gb)"/></svg>
<span class="t" style="left:672.70px;top:762.04px;font-size:12.24px;color:#6a7282;letter-spacing:-0.148px;">This</span>
<span class="t" style="left:659.20px;top:773.94px;font-size:12.36px;color:#6a7282;letter-spacing:0.381px;">Month</span>
<span class="t" style="left:650.30px;top:851.97px;font-size:12.32px;color:#6a7282;letter-spacing:-0.148px;">Average</span>
<span class="t" style="left:700.40px;top:905.94px;font-size:12.36px;color:#99a1af;">0</span>
<span class="t" style="left:772.40px;top:906.77px;font-size:11.38px;color:#99a1af;letter-spacing:-0.148px;">150</span>
<span class="t" style="left:849.23px;top:905.94px;font-size:12.36px;color:#99a1af;letter-spacing:0.101px;">300</span>
<span class="t" style="left:928.70px;top:906.77px;font-size:11.38px;color:#99a1af;letter-spacing:-0.148px;">451</span>
<div style="left:562px;top:941px;width:392px;height:1px;background:#f3f4f6"></div>
<div style="left:562px;top:952px;width:12px;height:12px;border-radius:50%;background:#10b981"></div>
<span class="t" style="left:583.10px;top:951.94px;font-size:12.36px;color:#4a5565;letter-spacing:0.107px;">This Month:</span>
<span class="t" style="left:653.20px;top:953.27px;font-size:11.97px;color:#101828;letter-spacing:-0.148px;-webkit-text-stroke:0.5px #101828;">410</span>
<div style="left:731.2px;top:952px;width:12px;height:12px;border-radius:50%;background:#3b82f6"></div>
<span class="t" style="left:751.50px;top:952.01px;font-size:12.27px;color:#4a5565;letter-spacing:-0.148px;">Average:</span>
<span class="t" style="left:804.00px;top:951.94px;font-size:12.36px;color:#101828;letter-spacing:0.426px;-webkit-text-stroke:0.5px #101828;">46</span>
<span class="t" style="left:876.90px;top:951.94px;font-size:12.36px;color:#10b981;letter-spacing:0.505px;-webkit-text-stroke:0.3px #10b981;">886% rate of</span>
<div style="left:734.5px;top:783.5px;width:143.5px;height:78.5px;background:#fff;border-radius:10px;border:1px solid #f3f4f6;box-shadow:0 20px 25px -5px rgba(0,0,0,.1),0 8px 10px -6px rgba(0,0,0,.1)"></div>
<span class="t" style="left:748.10px;top:801.45px;font-size:16.48px;color:#101828;letter-spacing:-0.011px;">This Month</span>
<span class="t" style="left:748.10px;top:832.19px;font-size:14.42px;color:#101828;letter-spacing:0.594px;-webkit-text-stroke:0.6px #101828;">410 registrations</span>
<div class="card" style="left:83px;top:1019px;width:892px;height:450px"></div>
<div style="left:84px;top:1075px;width:890px;height:1px;background:#e5e7eb"></div>
<span class="t" style="left:101.00px;top:1031.19px;font-size:14.42px;color:#101828;letter-spacing:-0.040px;-webkit-text-stroke:0.48px #101828;">Active Member Comparison</span>
<span class="t" style="left:101.00px;top:1053.94px;font-size:12.36px;color:#6a7282;letter-spacing:0.121px;">Selected period vs Previous period</span>
<div style="left:601px;top:1034px;width:260px;height:28px;background:#fff;border:1px solid #e5e7eb;border-radius:6px;box-shadow:0 1px 2px rgba(0,0,0,.04)"></div>
<svg style="left:611.90px;top:1041.00px" width="14" height="14" viewBox="0 0 24 24" fill="none" stroke="#6a7282" stroke-width="2" stroke-linecap="round" stroke-linejoin="round" ><path d="M8 2v4"/><path d="M16 2v4"/><rect width="18" height="18" x="3" y="4" rx="2"/><path d="M3 10h18"/></svg>
<span class="t" style="left:638.80px;top:1041.94px;font-size:12.36px;color:#101828;letter-spacing:0.132px;">Mar 01, 2026 - Mar 31, 2026</span>
<svg style="left:878.90px;top:1041.00px" width="14" height="14" viewBox="0 0 24 24" fill="none" stroke="#101828" stroke-width="2" stroke-linecap="round" stroke-linejoin="round" ><polygon points="22 3 2 3 10 12.460 10 19 14 21 14 12.460 22 3"/></svg>
<span class="t" style="left:906.90px;top:1041.94px;font-size:12.36px;color:#101828;-webkit-text-stroke:0.3px #101828;">Update</span>
<svg style="left:0;top:0" width="1920" height="1574" viewBox="0 0 1920 1574"><g stroke="#f3f4f6" stroke-width="1" stroke-dasharray="3 3"><line x1="172.6" x2="933" y1="1107.75" y2="1107.75"/><line x1="172.6" x2="933" y1="1141.45" y2="1141.45"/><line x1="172.6" x2="933" y1="1175.1" y2="1175.1"/><line x1="172.6" x2="933" y1="1208.8" y2="1208.8"/></g><path d="M172.60,1117.86C181.05,1146.21,189.50,1174.56,197.95,1195.34C206.40,1216.11,214.84,1242.50,223.29,1242.50C231.74,1242.50,240.19,1242.50,248.64,1242.50C257.09,1242.50,265.54,1242.50,273.99,1242.50C282.44,1242.50,290.88,1242.50,299.33,1242.50C307.78,1242.50,316.23,1242.50,324.68,1242.50C333.13,1242.50,341.58,1242.50,350.03,1242.50C358.48,1242.50,366.92,1242.50,375.37,1242.50C383.82,1242.50,392.27,1242.50,400.72,1242.50C409.17,1242.50,417.62,1242.50,426.07,1242.50C434.52,1242.50,442.96,1242.50,451.41,1242.50C459.86,1242.50,468.31,1242.50,476.76,1242.50C485.21,1242.50,493.66,1242.50,502.11,1242.50C510.56,1242.50,519.00,1242.50,527.45,1242.50C535.90,1242.50,544.35,1242.50,552.80,1242.50C561.25,1242.50,569.70,1242.50,578.15,1242.50C586.60,1242.50,595.04,1242.50,603.49,1242.50C611.94,1242.50,620.39,1242.50,628.84,1242.50C637.29,1242.50,645.74,1242.50,654.19,1242.50C662.64,1242.50,671.08,1242.50,679.53,1242.50C687.98,1242.50,696.43,1242.50,704.88,1242.50C713.33,1242.50,721.78,1242.50,730.23,1242.50C738.68,1242.50,747.12,1242.50,755.57,1242.50C764.02,1242.50,772.47,1242.50,780.92,1242.50C789.37,1242.50,797.82,1242.50,806.27,1242.50C814.72,1242.50,823.16,1242.50,831.61,1242.50C840.06,1242.50,848.51,1242.50,856.96,1242.50C865.41,1242.50,873.86,1242.50,882.31,1242.50C890.76,1242.50,899.20,1242.50,907.65,1242.50C916.10,1242.50,924.55,1242.50,933.00,1242.50" fill="none" stroke="#3b82f6" stroke-width="3" stroke-linecap="round"/><circle cx="172.60" cy="1117.86" r="5.2" fill="#3b82f6"/><circle cx="197.95" cy="1195.34" r="5.2" fill="#3b82f6"/><circle cx="223.29" cy="1242.50" r="5.2" fill="#3b82f6"/><circle cx="248.64" cy="1242.50" r="5.2" fill="#3b82f6"/><circle cx="273.99" cy="1242.50" r="5.2" fill="#3b82f6"/><circle cx="299.33" cy="1242.50" r="5.2" fill="#3b82f6"/><circle cx="324.68" cy="1242.50" r="5.2" fill="#3b82f6"/><circle cx="350.03" cy="1242.50" r="5.2" fill="#3b82f6"/><circle cx="375.37" cy="1242.50" r="5.2" fill="#3b82f6"/><circle cx="400.72" cy="1242.50" r="5.2" fill="#3b82f6"/><circle cx="426.07" cy="1242.50" r="5.2" fill="#3b82f6"/><circle cx="451.41" cy="1242.50" r="5.2" fill="#3b82f6"/><circle cx="476.76" cy="1242.50" r="5.2" fill="#3b82f6"/><circle cx="502.11" cy="1242.50" r="5.2" fill="#3b82f6"/><circle cx="527.45" cy="1242.50" r="5.2" fill="#3b82f6"/><circle cx="552.80" cy="1242.50" r="5.2" fill="#3b82f6"/><circle cx="578.15" cy="1242.50" r="5.2" fill="#3b82f6"/><circle cx="603.49" cy="1242.50" r="5.2" fill="#3b82f6"/><circle cx="628.84" cy="1242.50" r="5.2" fill="#3b82f6"/><circle cx="654.19" cy="1242.50" r="5.2" fill="#3b82f6"/><circle cx="679.53" cy="1242.50" r="5.2" fill="#3b82f6"/><circle cx="704.88" cy="1242.50" r="5.2" fill="#3b82f6"/><circle cx="730.23" cy="1242.50" r="5.2" fill="#3b82f6"/><circle cx="755.57" cy="1242.50" r="5.2" fill="#3b82f6"/><circle cx="780.92" cy="1242.50" r="5.2" fill="#3b82f6"/><circle cx="806.27" cy="1242.50" r="5.2" fill="#3b82f6"/><circle cx="831.61" cy="1242.50" r="5.2" fill="#3b82f6"/><circle cx="856.96" cy="1242.50" r="5.2" fill="#3b82f6"/><circle cx="882.31" cy="1242.50" r="5.2" fill="#3b82f6"/><circle cx="907.65" cy="1242.50" r="5.2" fill="#3b82f6"/><circle cx="933.00" cy="1242.50" r="5.2" fill="#3b82f6"/><path d="M172.60,1242.50C181.05,1242.50,189.50,1242.50,197.95,1242.50C206.40,1242.50,214.84,1242.50,223.29,1242.50C231.74,1242.50,240.19,1242.50,248.64,1242.50C257.09,1242.50,265.54,1242.50,273.99,1242.50C282.44,1242.50,290.88,1242.50,299.33,1242.50C307.78,1242.50,316.23,1242.50,324.68,1242.50C333.13,1242.50,341.58,1242.50,350.03,1242.50C358.48,1242.50,366.92,1242.50,375.37,1242.50C383.82,1242.50,392.27,1242.50,400.72,1242.50C409.17,1242.50,417.62,1242.50,426.07,1242.50C434.52,1242.50,442.96,1242.50,451.41,1242.50C459.86,1242.50,468.31,1242.50,476.76,1242.50C485.21,1242.50,493.66,1242.50,502.11,1242.50C510.56,1242.50,519.00,1242.50,527.45,1242.50C535.90,1242.50,544.35,1242.50,552.80,1242.50C561.25,1242.50,569.70,1242.50,578.15,1242.50C586.60,1242.50,595.04,1242.50,603.49,1242.50C611.94,1242.50,620.39,1242.50,628.84,1242.50C637.29,1242.50,645.74,1242.50,654.19,1242.50C662.64,1242.50,671.08,1242.50,679.53,1242.50C687.98,1242.50,696.43,1242.50,704.88,1242.50C713.33,1242.50,721.78,1242.50,730.23,1242.50C738.68,1242.50,747.12,1242.50,755.57,1242.50C764.02,1242.50,772.47,1242.50,780.92,1242.50C789.37,1242.50,797.82,1242.50,806.27,1242.50C814.72,1242.50,823.16,1242.50,831.61,1242.50C840.06,1242.50,848.51,1242.50,856.96,1242.50C865.41,1242.50,873.86,1242.50,882.31,1242.50C890.76,1242.50,899.20,1222.29,907.65,1207.97C916.10,1193.65,924.55,1175.12,933.00,1156.60" fill="none" stroke="#f59e0b" stroke-width="3" stroke-dasharray="5 5"/><circle cx="172.60" cy="1242.50" r="4" fill="#f59e0b" stroke="#f59e0b" stroke-width="3" stroke-dasharray="5 5"/><circle cx="197.95" cy="1242.50" r="4" fill="#f59e0b" stroke="#f59e0b" stroke-width="3" stroke-dasharray="5 5"/><circle cx="223.29" cy="1242.50" r="4" fill="#f59e0b" stroke="#f59e0b" stroke-width="3" stroke-dasharray="5 5"/><circle cx="248.64" cy="1242.50" r="4" fill="#f59e0b" stroke="#f59e0b" stroke-width="3" stroke-dasharray="5 5"/><circle cx="273.99" cy="1242.50" r="4" fill="#f59e0b" stroke="#f59e0b" stroke-width="3" stroke-dasharray="5 5"/><circle cx="299.33" cy="1242.50" r="4" fill="#f59e0b" stroke="#f59e0b" stroke-width="3" stroke-dasharray="5 5"/><circle cx="324.68" cy="1242.50" r="4" fill="#f59e0b" stroke="#f59e0b" stroke-width="3" stroke-dasharray="5 5"/><circle cx="350.03" cy="1242.50" r="4" fill="#f59e0b" stroke="#f59e0b" stroke-width="3" stroke-dasharray="5 5"/><circle cx="375.37" cy="1242.50" r="4" fill="#f59e0b" stroke="#f59e0b" stroke-width="3" stroke-dasharray="5 5"/><circle cx="400.72" cy="1242.50" r="4" fill="#f59e0b" stroke="#f59e0b" stroke-width="3" stroke-dasharray="5 5"/><circle cx="426.07" cy="1242.50" r="4" fill="#f59e0b" stroke="#f59e0b" stroke-width="3" stroke-dasharray="5 5"/><circle cx="451.41" cy="1242.50" r="4" fill="#f59e0b" stroke="#f59e0b" stroke-width="3" stroke-dasharray="5 5"/><circle cx="476.76" cy="1242.50" r="4" fill="#f59e0b" stroke="#f59e0b" stroke-width="3" stroke-dasharray="5 5"/><circle cx="502.11" cy="1242.50" r="4" fill="#f59e0b" stroke="#f59e0b" stroke-width="3" stroke-dasharray="5 5"/><circle cx="527.45" cy="1242.50" r="4" fill="#f59e0b" stroke="#f59e0b" stroke-width="3" stroke-dasharray="5 5"/><circle cx="552.80" cy="1242.50" r="4" fill="#f59e0b" stroke="#f59e0b" stroke-width="3" stroke-dasharray="5 5"/><circle cx="578.15" cy="1242.50" r="4" fill="#f59e0b" stroke="#f59e0b" stroke-width="3" stroke-dasharray="5 5"/><circle cx="603.49" cy="1242.50" r="4" fill="#f59e0b" stroke="#f59e0b" stroke-width="3" stroke-dasharray="5 5"/><circle cx="628.84" cy="1242.50" r="4" fill="#f59e0b" stroke="#f59e0b" stroke-width="3" stroke-dasharray="5 5"/><circle cx="654.19" cy="1242.50" r="4" fill="#f59e0b" stroke="#f59e0b" stroke-width="3" stroke-dasharray="5 5"/><circle cx="679.53" cy="1242.50" r="4" fill="#f59e0b" stroke="#f59e0b" stroke-width="3" stroke-dasharray="5 5"/><circle cx="704.88" cy="1242.50" r="4" fill="#f59e0b" stroke="#f59e0b" stroke-width="3" stroke-dasharray="5 5"/><circle cx="730.23" cy="1242.50" r="4" fill="#f59e0b" stroke="#f59e0b" stroke-width="3" stroke-dasharray="5 5"/><circle cx="755.57" cy="1242.50" r="4" fill="#f59e0b" stroke="#f59e0b" stroke-width="3" stroke-dasharray="5 5"/><circle cx="780.92" cy="1242.50" r="4" fill="#f59e0b" stroke="#f59e0b" stroke-width="3" stroke-dasharray="5 5"/><circle cx="806.27" cy="1242.50" r="4" fill="#f59e0b" stroke="#f59e0b" stroke-width="3" stroke-dasharray="5 5"/><circle cx="831.61" cy="1242.50" r="4" fill="#f59e0b" stroke="#f59e0b" stroke-width="3" stroke-dasharray="5 5"/><circle cx="856.96" cy="1242.50" r="4" fill="#f59e0b" stroke="#f59e0b" stroke-width="3" stroke-dasharray="5 5"/><circle cx="882.31" cy="1242.50" r="4" fill="#f59e0b" stroke="#f59e0b" stroke-width="3" stroke-dasharray="5 5"/><circle cx="907.65" cy="1207.97" r="4" fill="#f59e0b" stroke="#f59e0b" stroke-width="3" stroke-dasharray="5 5"/><circle cx="933.00" cy="1156.60" r="4" fill="#f59e0b" stroke="#f59e0b" stroke-width="3" stroke-dasharray="5 5"/><g font-family='"Liberation Sans", sans-serif' font-size="12.3" fill="#99a1af" text-anchor="end"><text x="178.60" y="1257.2" transform="rotate(-45 178.60 1257.2)" textLength="32.5">03/01</text><text x="229.29" y="1257.2" transform="rotate(-45 229.29 1257.2)" textLength="32.5">03/03</text><text x="279.99" y="1257.2" transform="rotate(-45 279.99 1257.2)" textLength="32.5">03/05</text><text x="330.68" y="1257.2" transform="rotate(-45 330.68 1257.2)" textLength="32.5">03/07</text><text x="381.37" y="1257.2" transform="rotate(-45 381.37 1257.2)" textLength="32.5">03/09</text><text x="432.07" y="1257.2" transform="rotate(-45 432.07 1257.2)" textLength="32.5">03/11</text><text x="482.76" y="1257.2" transform="rotate(-45 482.76 1257.2)" textLength="32.5">03/13</text><text x="533.45" y="1257.2" transform="rotate(-45 533.45 1257.2)" textLength="32.5">03/15</text><text x="584.15" y="1257.2" transform="rotate(-45 584.15 1257.2)" textLength="32.5">03/17</text><text x="634.84" y="1257.2" transform="rotate(-45 634.84 1257.2)" textLength="32.5">03/19</text><text x="685.53" y="1257.2" transform="rotate(-45 685.53 1257.2)" textLength="32.5">03/21</text><text x="736.23" y="1257.2" transform="rotate(-45 736.23 1257.2)" textLength="32.5">03/23</text><text x="786.92" y="1257.2" transform="rotate(-45 786.92 1257.2)" textLength="32.5">03/25</text><text x="837.61" y="1257.2" transform="rotate(-45 837.61 1257.2)" textLength="32.5">03/27</text><text x="888.31" y="1257.2" transform="rotate(-45 888.31 1257.2)" textLength="32.5">03/29</text><text x="939.00" y="1257.2" transform="rotate(-45 939.00 1257.2)" textLength="32.5">03/31</text></g></svg>
<span class="t" style="left:134.60px;top:1102.77px;font-size:11.38px;color:#99a1af;letter-spacing:-0.148px;">160</span>
<span class="t" style="left:134.60px;top:1136.77px;font-size:11.38px;color:#99a1af;letter-spacing:-0.148px;">120</span>
<span class="t" style="left:139.90px;top:1170.11px;font-size:12.16px;color:#99a1af;letter-spacing:-0.148px;">80</span>
<span class="t" style="left:139.90px;top:1203.11px;font-size:12.16px;color:#99a1af;letter-spacing:-0.148px;">40</span>
<span class="t" style="left:146.40px;top:1236.94px;font-size:12.36px;color:#99a1af;">0</span>
<div style="left:403.9px;top:1315.0px;width:14px;height:14px;border-radius:50%;background:#3b82f6"></div>
<span class="t" style="left:422.60px;top:1315.94px;font-size:12.36px;color:#4a5565;letter-spacing:0.151px;-webkit-text-stroke:0.3px #4a5565;">Selected Period</span>
<div style="left:523.0px;top:1315.0px;width:14px;height:14px;border-radius:50%;background:#f59e0b"></div>
<span class="t" style="left:540.80px;top:1315.94px;font-size:12.36px;color:#4a5565;letter-spacing:0.173px;-webkit-text-stroke:0.3px #4a5565;">Previous Period</span>
<div style="left:104px;top:1385px;width:850px;height:1px;background:#f3f4f6"></div>
<div style="left:104.2px;top:1398px;width:234.4px;height:49.5px;background:#f9fafb;border:1px solid #f3f4f6;border-radius:8px"></div>
<div style="left:117.1px;top:1418.9px;width:8px;height:8px;border-radius:50%;background:#3b82f6"></div>
<span class="t" style="left:133.60px;top:1409.81px;font-size:11.33px;color:#99a1af;letter-spacing:0.107px;">SELECTED PERİOD</span>
<span class="t" style="left:132.60px;top:1424.94px;font-size:12.36px;color:#364153;letter-spacing:0.597px;-webkit-text-stroke:0.5px #364153;">March 1, 2026 - March 31, 2026</span>
<span class="t" style="left:352.00px;top:1417.65px;font-size:11.52px;color:#d1d5dc;letter-spacing:-0.148px;">vs</span>
<div style="left:376.4px;top:1398px;width:270.4px;height:49.5px;background:#f9fafb;border:1px solid #f3f4f6;border-radius:8px"></div>
<div style="left:389px;top:1418.9px;width:8px;height:8px;border-radius:50%;background:#f59e0b"></div>
<span class="t" style="left:406.10px;top:1409.81px;font-size:11.33px;color:#99a1af;letter-spacing:0.154px;">PREVİOUS PERİOD</span>
<span class="t" style="left:406.10px;top:1424.94px;font-size:12.36px;color:#364153;letter-spacing:0.545px;-webkit-text-stroke:0.5px #364153;">January 29, 2026 - February 28, 2026</span>
<div class="card" style="left:999px;top:1019px;width:892px;height:450px"></div>
<div style="left:1000px;top:1075px;width:890px;height:1px;background:#e5e7eb"></div>
<span class="t" style="left:1016.00px;top:1031.19px;font-size:14.42px;color:#101828;letter-spacing:-0.046px;-webkit-text-stroke:0.48px #101828;">New Member Comparison</span>
<span class="t" style="left:1017.00px;top:1053.94px;font-size:12.36px;color:#6a7282;letter-spacing:0.121px;">Selected period vs Previous period</span>
<div style="left:1517px;top:1034px;width:260px;height:28px;background:#fff;border:1px solid #e5e7eb;border-radius:6px;box-shadow:0 1px 2px rgba(0,0,0,.04)"></div>
<svg style="left:1527.90px;top:1041.00px" width="14" height="14" viewBox="0 0 24 24" fill="none" stroke="#6a7282" stroke-width="2" stroke-linecap="round" stroke-linejoin="round" ><path d="M8 2v4"/><path d="M16 2v4"/><rect width="18" height="18" x="3" y="4" rx="2"/><path d="M3 10h18"/></svg>
<span class="t" style="left:1554.80px;top:1041.94px;font-size:12.36px;color:#101828;letter-spacing:0.132px;">Mar 01, 2026 - Mar 31, 2026</span>
<svg style="left:1794.90px;top:1041.00px" width="14" height="14" viewBox="0 0 24 24" fill="none" stroke="#101828" stroke-width="2" stroke-linecap="round" stroke-linejoin="round" ><polygon points="22 3 2 3 10 12.460 10 19 14 21 14 12.460 22 3"/></svg>
<span class="t" style="left:1822.90px;top:1041.94px;font-size:12.36px;color:#101828;-webkit-text-stroke:0.3px #101828;">Update</span>
<svg style="left:0;top:0" width="1920" height="1574" viewBox="0 0 1920 1574"><g stroke="#f3f4f6" stroke-width="1" stroke-dasharray="3 3"><line x1="1088.6" x2="1849" y1="1107.75" y2="1107.75"/><line x1="1088.6" x2="1849" y1="1141.45" y2="1141.45"/><line x1="1088.6" x2="1849" y1="1175.1" y2="1175.1"/><line x1="1088.6" x2="1849" y1="1208.8" y2="1208.8"/></g><path d="M1088.60,1123.25C1097.05,1149.35,1105.50,1175.46,1113.95,1195.34C1122.40,1215.21,1130.84,1242.50,1139.29,1242.50C1147.74,1242.50,1156.19,1242.50,1164.64,1242.50C1173.09,1242.50,1181.54,1242.50,1189.99,1242.50C1198.44,1242.50,1206.88,1242.50,1215.33,1242.50C1223.78,1242.50,1232.23,1242.50,1240.68,1242.50C1249.13,1242.50,1257.58,1242.50,1266.03,1242.50C1274.48,1242.50,1282.92,1242.50,1291.37,1242.50C1299.82,1242.50,1308.27,1242.50,1316.72,1242.50C1325.17,1242.50,1333.62,1242.50,1342.07,1242.50C1350.52,1242.50,1358.96,1242.50,1367.41,1242.50C1375.86,1242.50,1384.31,1242.50,1392.76,1242.50C1401.21,1242.50,1409.66,1242.50,1418.11,1242.50C1426.56,1242.50,1435.00,1242.50,1443.45,1242.50C1451.90,1242.50,1460.35,1242.50,1468.80,1242.50C1477.25,1242.50,1485.70,1242.50,1494.15,1242.50C1502.60,1242.50,1511.04,1242.50,1519.49,1242.50C1527.94,1242.50,1536.39,1242.50,1544.84,1242.50C1553.29,1242.50,1561.74,1242.50,1570.19,1242.50C1578.64,1242.50,1587.08,1242.50,1595.53,1242.50C1603.98,1242.50,1612.43,1242.50,1620.88,1242.50C1629.33,1242.50,1637.78,1242.50,1646.23,1242.50C1654.68,1242.50,1663.12,1242.50,1671.57,1242.50C1680.02,1242.50,1688.47,1242.50,1696.92,1242.50C1705.37,1242.50,1713.82,1242.50,1722.27,1242.50C1730.72,1242.50,1739.16,1242.50,1747.61,1242.50C1756.06,1242.50,1764.51,1242.50,1772.96,1242.50C1781.41,1242.50,1789.86,1242.50,1798.31,1242.50C1806.76,1242.50,1815.20,1242.50,1823.65,1242.50C1832.10,1242.50,1840.55,1242.50,1849.00,1242.50" fill="none" stroke="#10b981" stroke-width="3" stroke-linecap="round"/><circle cx="1088.60" cy="1123.25" r="5.2" fill="#10b981"/><circle cx="1113.95" cy="1195.34" r="5.2" fill="#10b981"/><circle cx="1139.29" cy="1242.50" r="5.2" fill="#10b981"/><circle cx="1164.64" cy="1242.50" r="5.2" fill="#10b981"/><circle cx="1189.99" cy="1242.50" r="5.2" fill="#10b981"/><circle cx="1215.33" cy="1242.50" r="5.2" fill="#10b981"/><circle cx="1240.68" cy="1242.50" r="5.2" fill="#10b981"/><circle cx="1266.03" cy="1242.50" r="5.2" fill="#10b981"/><circle cx="1291.37" cy="1242.50" r="5.2" fill="#10b981"/><circle cx="1316.72" cy="1242.50" r="5.2" fill="#10b981"/><circle cx="1342.07" cy="1242.50" r="5.2" fill="#10b981"/><circle cx="1367.41" cy="1242.50" r="5.2" fill="#10b981"/><circle cx="1392.76" cy="1242.50" r="5.2" fill="#10b981"/><circle cx="1418.11" cy="1242.50" r="5.2" fill="#10b981"/><circle cx="1443.45" cy="1242.50" r="5.2" fill="#10b981"/><circle cx="1468.80" cy="1242.50" r="5.2" fill="#10b981"/><circle cx="1494.15" cy="1242.50" r="5.2" fill="#10b981"/><circle cx="1519.49" cy="1242.50" r="5.2" fill="#10b981"/><circle cx="1544.84" cy="1242.50" r="5.2" fill="#10b981"/><circle cx="1570.19" cy="1242.50" r="5.2" fill="#10b981"/><circle cx="1595.53" cy="1242.50" r="5.2" fill="#10b981"/><circle cx="1620.88" cy="1242.50" r="5.2" fill="#10b981"/><circle cx="1646.23" cy="1242.50" r="5.2" fill="#10b981"/><circle cx="1671.57" cy="1242.50" r="5.2" fill="#10b981"/><circle cx="1696.92" cy="1242.50" r="5.2" fill="#10b981"/><circle cx="1722.27" cy="1242.50" r="5.2" fill="#10b981"/><circle cx="1747.61" cy="1242.50" r="5.2" fill="#10b981"/><circle cx="1772.96" cy="1242.50" r="5.2" fill="#10b981"/><circle cx="1798.31" cy="1242.50" r="5.2" fill="#10b981"/><circle cx="1823.65" cy="1242.50" r="5.2" fill="#10b981"/><circle cx="1849.00" cy="1242.50" r="5.2" fill="#10b981"/><path d="M1088.60,1242.50C1097.05,1242.50,1105.50,1242.50,1113.95,1242.50C1122.40,1242.50,1130.84,1242.50,1139.29,1242.50C1147.74,1242.50,1156.19,1242.50,1164.64,1242.50C1173.09,1242.50,1181.54,1242.50,1189.99,1242.50C1198.44,1242.50,1206.88,1242.50,1215.33,1242.50C1223.78,1242.50,1232.23,1242.50,1240.68,1242.50C1249.13,1242.50,1257.58,1242.50,1266.03,1242.50C1274.48,1242.50,1282.92,1242.50,1291.37,1242.50C1299.82,1242.50,1308.27,1242.50,1316.72,1242.50C1325.17,1242.50,1333.62,1242.50,1342.07,1242.50C1350.52,1242.50,1358.96,1242.50,1367.41,1242.50C1375.86,1242.50,1384.31,1242.50,1392.76,1242.50C1401.21,1242.50,1409.66,1242.50,1418.11,1242.50C1426.56,1242.50,1435.00,1242.50,1443.45,1242.50C1451.90,1242.50,1460.35,1242.50,1468.80,1242.50C1477.25,1242.50,1485.70,1242.50,1494.15,1242.50C1502.60,1242.50,1511.04,1242.50,1519.49,1242.50C1527.94,1242.50,1536.39,1242.50,1544.84,1242.50C1553.29,1242.50,1561.74,1242.50,1570.19,1242.50C1578.64,1242.50,1587.08,1242.50,1595.53,1242.50C1603.98,1242.50,1612.43,1242.50,1620.88,1242.50C1629.33,1242.50,1637.78,1242.50,1646.23,1242.50C1654.68,1242.50,1663.12,1242.50,1671.57,1242.50C1680.02,1242.50,1688.47,1242.50,1696.92,1242.50C1705.37,1242.50,1713.82,1242.50,1722.27,1242.50C1730.72,1242.50,1739.16,1242.50,1747.61,1242.50C1756.06,1242.50,1764.51,1242.50,1772.96,1242.50C1781.41,1242.50,1789.86,1242.50,1798.31,1242.50C1806.76,1242.50,1815.20,1222.50,1823.65,1207.97C1832.10,1193.44,1840.55,1174.39,1849.00,1155.33" fill="none" stroke="#f59e0b" stroke-width="3" stroke-dasharray="5 5"/><circle cx="1088.60" cy="1242.50" r="4" fill="#f59e0b" stroke="#f59e0b" stroke-width="3" stroke-dasharray="5 5"/><circle cx="1113.95" cy="1242.50" r="4" fill="#f59e0b" stroke="#f59e0b" stroke-width="3" stroke-dasharray="5 5"/><circle cx="1139.29" cy="1242.50" r="4" fill="#f59e0b" stroke="#f59e0b" stroke-width="3" stroke-dasharray="5 5"/><circle cx="1164.64" cy="1242.50" r="4" fill="#f59e0b" stroke="#f59e0b" stroke-width="3" stroke-dasharray="5 5"/><circle cx="1189.99" cy="1242.50" r="4" fill="#f59e0b" stroke="#f59e0b" stroke-width="3" stroke-dasharray="5 5"/><circle cx="1215.33" cy="1242.50" r="4" fill="#f59e0b" stroke="#f59e0b" stroke-width="3" stroke-dasharray="5 5"/><circle cx="1240.68" cy="1242.50" r="4" fill="#f59e0b" stroke="#f59e0b" stroke-width="3" stroke-dasharray="5 5"/><circle cx="1266.03" cy="1242.50" r="4" fill="#f59e0b" stroke="#f59e0b" stroke-width="3" stroke-dasharray="5 5"/><circle cx="1291.37" cy="1242.50" r="4" fill="#f59e0b" stroke="#f59e0b" stroke-width="3" stroke-dasharray="5 5"/><circle cx="1316.72" cy="1242.50" r="4" fill="#f59e0b" stroke="#f59e0b" stroke-width="3" stroke-dasharray="5 5"/><circle cx="1342.07" cy="1242.50" r="4" fill="#f59e0b" stroke="#f59e0b" stroke-width="3" stroke-dasharray="5 5"/><circle cx="1367.41" cy="1242.50" r="4" fill="#f59e0b" stroke="#f59e0b" stroke-width="3" stroke-dasharray="5 5"/><circle cx="1392.76" cy="1242.50" r="4" fill="#f59e0b" stroke="#f59e0b" stroke-width="3" stroke-dasharray="5 5"/><circle cx="1418.11" cy="1242.50" r="4" fill="#f59e0b" stroke="#f59e0b" stroke-width="3" stroke-dasharray="5 5"/><circle cx="1443.45" cy="1242.50" r="4" fill="#f59e0b" stroke="#f59e0b" stroke-width="3" stroke-dasharray="5 5"/><circle cx="1468.80" cy="1242.50" r="4" fill="#f59e0b" stroke="#f59e0b" stroke-width="3" stroke-dasharray="5 5"/><circle cx="1494.15" cy="1242.50" r="4" fill="#f59e0b" stroke="#f59e0b" stroke-width="3" stroke-dasharray="5 5"/><circle cx="1519.49" cy="1242.50" r="4" fill="#f59e0b" stroke="#f59e0b" stroke-width="3" stroke-dasharray="5 5"/><circle cx="1544.84" cy="1242.50" r="4" fill="#f59e0b" stroke="#f59e0b" stroke-width="3" stroke-dasharray="5 5"/><circle cx="1570.19" cy="1242.50" r="4" fill="#f59e0b" stroke="#f59e0b" stroke-width="3" stroke-dasharray="5 5"/><circle cx="1595.53" cy="1242.50" r="4" fill="#f59e0b" stroke="#f59e0b" stroke-width="3" stroke-dasharray="5 5"/><circle cx="1620.88" cy="1242.50" r="4" fill="#f59e0b" stroke="#f59e0b" stroke-width="3" stroke-dasharray="5 5"/><circle cx="1646.23" cy="1242.50" r="4" fill="#f59e0b" stroke="#f59e0b" stroke-width="3" stroke-dasharray="5 5"/><circle cx="1671.57" cy="1242.50" r="4" fill="#f59e0b" stroke="#f59e0b" stroke-width="3" stroke-dasharray="5 5"/><circle cx="1696.92" cy="1242.50" r="4" fill="#f59e0b" stroke="#f59e0b" stroke-width="3" stroke-dasharray="5 5"/><circle cx="1722.27" cy="1242.50" r="4" fill="#f59e0b" stroke="#f59e0b" stroke-width="3" stroke-dasharray="5 5"/><circle cx="1747.61" cy="1242.50" r="4" fill="#f59e0b" stroke="#f59e0b" stroke-width="3" stroke-dasharray="5 5"/><circle cx="1772.96" cy="1242.50" r="4" fill="#f59e0b" stroke="#f59e0b" stroke-width="3" stroke-dasharray="5 5"/><circle cx="1798.31" cy="1242.50" r="4" fill="#f59e0b" stroke="#f59e0b" stroke-width="3" stroke-dasharray="5 5"/><circle cx="1823.65" cy="1207.97" r="4" fill="#f59e0b" stroke="#f59e0b" stroke-width="3" stroke-dasharray="5 5"/><circle cx="1849.00" cy="1155.33" r="4" fill="#f59e0b" stroke="#f59e0b" stroke-width="3" stroke-dasharray="5 5"/><g font-family='"Liberation Sans", sans-serif' font-size="12.3" fill="#99a1af" text-anchor="end"><text x="1094.60" y="1257.2" transform="rotate(-45 1094.60 1257.2)" textLength="32.5">03/01</text><text x="1145.29" y="1257.2" transform="rotate(-45 1145.29 1257.2)" textLength="32.5">03/03</text><text x="1195.99" y="1257.2" transform="rotate(-45 1195.99 1257.2)" textLength="32.5">03/05</text><text x="1246.68" y="1257.2" transform="rotate(-45 1246.68 1257.2)" textLength="32.5">03/07</text><text x="1297.37" y="1257.2" transform="rotate(-45 1297.37 1257.2)" textLength="32.5">03/09</text><text x="1348.07" y="1257.2" transform="rotate(-45 1348.07 1257.2)" textLength="32.5">03/11</text><text x="1398.76" y="1257.2" transform="rotate(-45 1398.76 1257.2)" textLength="32.5">03/13</text><text x="1449.45" y="1257.2" transform="rotate(-45 1449.45 1257.2)" textLength="32.5">03/15</text><text x="1500.15" y="1257.2" transform="rotate(-45 1500.15 1257.2)" textLength="32.5">03/17</text><text x="1550.84" y="1257.2" transform="rotate(-45 1550.84 1257.2)" textLength="32.5">03/19</text><text x="1601.53" y="1257.2" transform="rotate(-45 1601.53 1257.2)" textLength="32.5">03/21</text><text x="1652.23" y="1257.2" transform="rotate(-45 1652.23 1257.2)" textLength="32.5">03/23</text><text x="1702.92" y="1257.2" transform="rotate(-45 1702.92 1257.2)" textLength="32.5">03/25</text><text x="1753.61" y="1257.2" transform="rotate(-45 1753.61 1257.2)" textLength="32.5">03/27</text><text x="1804.31" y="1257.2" transform="rotate(-45 1804.31 1257.2)" textLength="32.5">03/29</text><text x="1855.00" y="1257.2" transform="rotate(-45 1855.00 1257.2)" textLength="32.5">03/31</text></g></svg>
<span class="t" style="left:1050.60px;top:1102.77px;font-size:11.38px;color:#99a1af;letter-spacing:-0.148px;">160</span>
<span class="t" style="left:1050.60px;top:1136.77px;font-size:11.38px;color:#99a1af;letter-spacing:-0.148px;">120</span>
<span class="t" style="left:1055.90px;top:1170.11px;font-size:12.16px;color:#99a1af;letter-spacing:-0.148px;">80</span>
<span class="t" style="left:1055.90px;top:1203.11px;font-size:12.16px;color:#99a1af;letter-spacing:-0.148px;">40</span>
<span class="t" style="left:1062.40px;top:1236.94px;font-size:12.36px;color:#99a1af;">0</span>
<div style="left:1319.9px;top:1315.0px;width:14px;height:14px;border-radius:50%;background:#10b981"></div>
<span class="t" style="left:1338.60px;top:1315.94px;font-size:12.36px;color:#4a5565;letter-spacing:0.151px;-webkit-text-stroke:0.3px #4a5565;">Selected Period</span>
<div style="left:1439.0px;top:1315.0px;width:14px;height:14px;border-radius:50%;background:#f59e0b"></div>
<span class="t" style="left:1456.80px;top:1315.94px;font-size:12.36px;color:#4a5565;letter-spacing:0.173px;-webkit-text-stroke:0.3px #4a5565;">Previous Period</span>
<div style="left:1020px;top:1385px;width:850px;height:1px;background:#f3f4f6"></div>
<div style="left:1020.2px;top:1398px;width:234.4px;height:49.5px;background:#f9fafb;border:1px solid #f3f4f6;border-radius:8px"></div>
<div style="left:1033.1px;top:1418.9px;width:8px;height:8px;border-radius:50%;background:#10b981"></div>
<span class="t" style="left:1049.60px;top:1409.81px;font-size:11.33px;color:#99a1af;letter-spacing:0.107px;">SELECTED PERİOD</span>
<span class="t" style="left:1048.60px;top:1424.94px;font-size:12.36px;color:#364153;letter-spacing:0.597px;-webkit-text-stroke:0.5px #364153;">March 1, 2026 - March 31, 2026</span>
<span class="t" style="left:1268.00px;top:1417.65px;font-size:11.52px;color:#d1d5dc;letter-spacing:-0.148px;">vs</span>
<div style="left:1292.4px;top:1398px;width:270.4px;height:49.5px;background:#f9fafb;border:1px solid #f3f4f6;border-radius:8px"></div>
<div style="left:1305px;top:1418.9px;width:8px;height:8px;border-radius:50%;background:#f59e0b"></div>
<span class="t" style="left:1322.10px;top:1409.81px;font-size:11.33px;color:#99a1af;letter-spacing:0.154px;">PREVİOUS PERİOD</span>
<span class="t" style="left:1322.10px;top:1424.94px;font-size:12.36px;color:#364153;letter-spacing:0.545px;-webkit-text-stroke:0.5px #364153;">January 29, 2026 - February 28, 2026</span>
</div></body></html>
